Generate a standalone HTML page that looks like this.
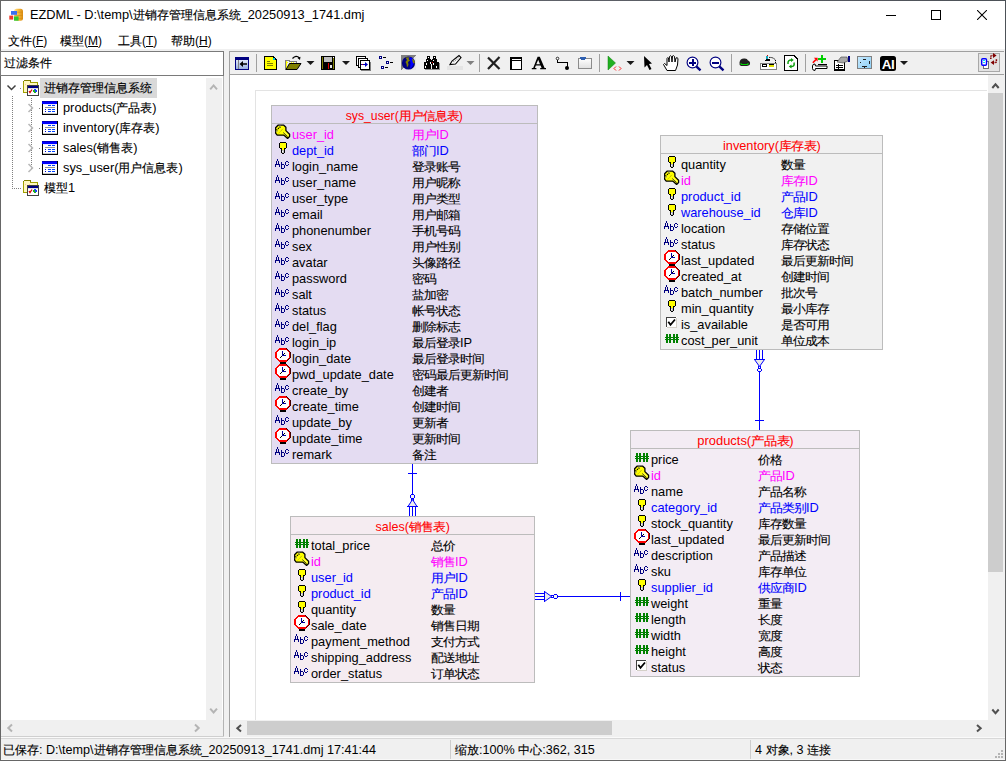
<!DOCTYPE html><html><head><meta charset="utf-8"><style>
html,body{margin:0;padding:0;width:1006px;height:761px;overflow:hidden;background:#f0f0f0}
body{position:relative;font-family:"Liberation Sans",sans-serif;}
.r{position:absolute}
.t{position:absolute;white-space:nowrap;line-height:16px;color:#000}
.dt{font-size:13.5px;line-height:16px;transform:scaleX(0.948);transform-origin:0 0}
.dt .c{font-size:13px;letter-spacing:-0.34px;display:inline-block;transform:translateY(0.6px) scaleY(0.89);transform-origin:50% 50%;-webkit-text-stroke:0.12px currentColor}
.tt .c{font-size:13px;letter-spacing:-0.23px;display:inline-block;transform:scaleY(0.9);transform-origin:50% 60%}
.c{-webkit-text-stroke:0.15px currentColor}
u{text-decoration:underline;text-underline-offset:1px}
</style></head><body>
<div class="r" style="left:0px;top:0px;width:1006px;height:761px;background:#f0f0f0;"></div>
<div class="r" style="left:0px;top:0px;width:1006px;height:1px;background:linear-gradient(to right,#666 0%,#60636a 50%,#4c5157 100%);"></div>
<div class="r" style="left:0px;top:0px;width:1px;height:761px;background:#666;"></div>
<div class="r" style="left:1005px;top:0px;width:1px;height:761px;background:linear-gradient(to bottom,#4c5157,#5a5d60 50%,#666);"></div>
<div class="r" style="left:0px;top:760px;width:1006px;height:1px;background:#666;"></div>
<div class="r" style="left:1px;top:1px;width:1004px;height:48px;background:#fff;"></div>
<!--ICON_APP-->
<div class="t" style="left:30px;top:6px;font-size:12.8px;line-height:18px;letter-spacing:0">EZDML - D:\temp\<span class="c" style="font-size:12px">进销存管理信息系统</span>_20250913_1741.dmj</div>
<div class="r" style="left:886px;top:15px;width:10px;height:1px;background:#000;"></div>
<div class="r" style="left:931px;top:10px;width:8px;height:8px;border:1px solid #000;"></div>
<svg class="r" style="left:977px;top:10px" width="10" height="10"><path d="M0 0L10 10M10 0L0 10" stroke="#000" stroke-width="1.05"/></svg>
<div class="t" style="left:8px;top:32px;font-size:12px;line-height:18px"><span class="c" style="font-size:11.6px">文件</span>(<u>F</u>)</div>
<div class="t" style="left:60px;top:32px;font-size:12px;line-height:18px"><span class="c" style="font-size:11.6px">模型</span>(<u>M</u>)</div>
<div class="t" style="left:118px;top:32px;font-size:12px;line-height:18px"><span class="c" style="font-size:11.6px">工具</span>(<u>T</u>)</div>
<div class="t" style="left:171px;top:32px;font-size:12px;line-height:18px"><span class="c" style="font-size:11.6px">帮助</span>(<u>H</u>)</div>
<div class="r" style="left:0px;top:51px;width:224px;height:25px;background:#fff;box-sizing:border-box;border:1px solid #7a7a7a;border-left-color:#7a7a7a;"></div>
<div class="t" style="left:4px;top:54px;font-size:12px;line-height:18px;"><span class="c" style="font-size:12px">过滤条件</span></div>
<div class="r" style="left:1px;top:76px;width:222px;height:644px;background:#fff;"></div>
<div class="r" style="left:223px;top:76px;width:1px;height:661px;background:#b4b4b4;"></div>
<div class="r" style="left:1px;top:736px;width:223px;height:1px;background:#cfcfcf;"></div>
<div class="r" style="left:206px;top:78px;width:16px;height:642px;background:#f0f0f0;"></div>
<div class="r" style="left:1px;top:720px;width:221px;height:16px;background:#f0f0f0;"></div>
<div class="r" style="left:229px;top:51px;width:775px;height:1px;background:#a0a0a0;"></div>
<div class="r" style="left:229px;top:51px;width:1px;height:686px;background:#a0a0a0;"></div>
<div class="r" style="left:230px;top:52px;width:774px;height:22px;background:#f0f0f0;"></div>
<div class="r" style="left:229px;top:74px;width:775px;height:1px;background:#a0a0a0;"></div>
<svg class="r" style="left:0;top:0" width="1006" height="80" shape-rendering="crispEdges"><rect x="235" y="57" width="14" height="13" fill="#000080"/><defs><linearGradient id="g1" x1="0" y1="0" x2="0" y2="1"><stop offset="0" stop-color="#e0e8f8"/><stop offset="1" stop-color="#98b0e0"/></linearGradient><linearGradient id="g2" x1="0" y1="0" x2="0" y2="1"><stop offset="0" stop-color="#ffffff"/><stop offset="1" stop-color="#e0e0e0"/></linearGradient><linearGradient id="g3" x1="0" y1="0" x2="1" y2="1"><stop offset="0" stop-color="#c8eaff"/><stop offset="1" stop-color="#8ccff5"/></linearGradient></defs><rect x="236" y="60" width="12" height="9" fill="url(#g1)"/><rect x="238" y="60" width="1" height="9" fill="#808080"/><path d="M239.5,64 L243,61 L243,63.3 L247,63.3 L247,64.7 L243,64.7 L243,67 Z" fill="#000" shape-rendering="auto"/><rect x="256" y="54" width="1" height="18" fill="#a0a0a0"/><path d="M264.5,56.5 H273 L276.5,60 V69.5 H264.5 Z" fill="#ffff00" stroke="#000" stroke-width="1"/><rect x="273" y="58" width="2" height="2" fill="#00c8e0"/><rect x="267" y="61" width="3" height="1" fill="#808000"/><rect x="267" y="63" width="6" height="1" fill="#808000"/><rect x="267" y="65" width="6" height="1" fill="#808000"/><path d="M285.5,60.5 H289 L290,61.5 H296 V69.5 H285.5 Z" fill="#f0f0f0" stroke="#808080" stroke-width="1"/><rect x="286" y="61" width="1" height="7" fill="#ffff00"/><rect x="287" y="62" width="1" height="1" fill="#ffff00"/><rect x="289" y="63" width="1" height="1" fill="#ffff00"/><rect x="291" y="62" width="1" height="1" fill="#ffff00"/><rect x="293" y="62" width="1" height="1" fill="#ffff00"/><path d="M286,69.5 L289.5,63.5 H301 L297,69.5 Z" fill="#808000" stroke="#000" stroke-width="1" shape-rendering="auto"/><path d="M292.5,58.5 Q296,54.5 299.5,58" fill="none" stroke="#000" stroke-width="1.2" shape-rendering="auto"/><path d="M297.5,58 L300.5,56.8 L300,60 Z" fill="#000" shape-rendering="auto"/><path d="M306.5,61 h8 l-4,4 z" fill="#1a1a1a" shape-rendering="auto"/><rect x="321" y="56" width="14" height="14" fill="#000"/><rect x="322" y="57" width="12" height="12" fill="#808000"/><rect x="323" y="57" width="10" height="12" fill="#000"/><rect x="324" y="57" width="8" height="5" fill="#c0c0c0"/><rect x="328" y="63" width="1" height="6" fill="#e00000"/><rect x="330" y="65" width="2" height="3" fill="#e8e8e8"/><rect x="333" y="57" width="1" height="1" fill="#fff"/><path d="M342,61 h8 l-4,4 z" fill="#1a1a1a" shape-rendering="auto"/><rect x="361" y="62" width="10" height="9" fill="#808080"/><rect x="356.5" y="56.5" width="9" height="9" fill="#fff" stroke="#000" stroke-width="1"/><rect x="358.5" y="58.5" width="9" height="9" fill="#fff" stroke="#000" stroke-width="1"/><rect x="360.5" y="60.5" width="9" height="9" fill="#fff" stroke="#000" stroke-width="1"/><rect x="361" y="64" width="6" height="1" fill="#0000c0"/><path d="M365,62 L368,64.5 L365,67 Z" fill="#0000c0" shape-rendering="auto"/><rect x="362" y="64" width="1" height="1" fill="#c00000"/><rect x="379" y="56" width="3" height="3" fill="#000080"/><rect x="380" y="57" width="1" height="1" fill="#fff"/><rect x="383" y="57" width="3" height="1" fill="#000"/><rect x="386" y="61" width="3" height="3" fill="#000080"/><rect x="387" y="62" width="1" height="1" fill="#fff"/><rect x="390" y="62" width="3" height="1" fill="#000"/><rect x="381" y="66" width="3" height="3" fill="#000080"/><rect x="382" y="67" width="1" height="1" fill="#fff"/><rect x="385" y="67" width="3" height="1" fill="#000"/><path d="M401,55 H416 L401,70 Z" fill="#808080"/><path d="M416,55 V70 H401 Z" fill="#e8e8e8"/><circle cx="408.5" cy="63" r="6.6" fill="#000080" shape-rendering="auto"/><path d="M409,57 L413,58.5 L414.5,62 L412,67 L410,69 L410.5,63 Z" fill="#0000ff" shape-rendering="auto"/><path d="M405.5,57.5 L409.5,57.2 L408.5,59 L410,60.5 L408,62 L408.5,65 L407,67.5 L406.5,64 L405.5,62 L407,60 Z M412,58.5 L414.2,60 L415,63.5 L413,63 L412.5,61 Z" fill="#808000" shape-rendering="auto"/><rect x="438" y="63" width="2" height="7" fill="#909090"/><rect x="425" y="69" width="15" height="1" fill="#909090"/><rect x="427" y="56" width="3" height="3" fill="#000"/><rect x="433" y="56" width="3" height="3" fill="#000"/><rect x="426" y="59" width="5" height="3" fill="#000"/><rect x="432" y="59" width="5" height="3" fill="#000"/><rect x="430" y="60" width="3" height="4" fill="#000"/><rect x="424" y="62" width="7" height="7" fill="#000"/><rect x="432" y="62" width="7" height="7" fill="#000"/><rect x="428" y="57" width="1" height="1" fill="#fff"/><rect x="434" y="57" width="1" height="1" fill="#fff"/><rect x="427" y="60" width="1" height="1" fill="#fff"/><rect x="433" y="60" width="1" height="1" fill="#fff"/><rect x="426" y="63" width="1" height="2" fill="#fff"/><rect x="430" y="62" width="1" height="2" fill="#fff"/><rect x="433" y="63" width="1" height="2" fill="#fff"/><rect x="425" y="66" width="1" height="2" fill="#fff"/><rect x="436" y="66" width="1" height="2" fill="#fff"/><rect x="432" y="62" width="1" height="1" fill="#e00000"/><path d="M450,64.5 L452,61 L459,55.5 L461,57.5 L455.5,64 Z" fill="#fff" stroke="#000" stroke-width="1.1" shape-rendering="auto"/><path d="M453.5,62 L458.5,57.5" stroke="#909090" stroke-width="1.5" stroke-dasharray="1 1" shape-rendering="auto"/><rect x="447" y="66" width="16" height="4" fill="#e4e4e4"/><path d="M466.5,61 h8 l-4,4 z" fill="#808080" shape-rendering="auto"/><rect x="479" y="54" width="1" height="18" fill="#a0a0a0"/><path d="M488,57.5 L499.5,69 M499.5,57 L488,69" stroke="#202020" stroke-width="2.2" shape-rendering="auto"/><rect x="510.75" y="57.75" width="10.5" height="11.5" fill="#fff" stroke="#000" stroke-width="1.5"/><rect x="510" y="60" width="12" height="1" fill="#000"/><path fill-rule="evenodd" d="M537.6,56.8 L539.8,56.8 L544.6,68 L546,68 L546,69.3 L540.2,69.3 L540.2,68 L541.6,68 L540.6,65.6 L535.8,65.6 L534.9,68 L536.4,68 L536.4,69.3 L531.8,69.3 L531.8,68 L533.2,68 Z M536.3,64.2 L540,64.2 L538.2,59.8 Z" fill="#000" shape-rendering="auto"/><path d="M557.5,60 V62.5 H567.5 V68" fill="none" stroke="#000" stroke-width="1"/><circle cx="557.5" cy="58.5" r="1.3" fill="#fff" stroke="#000" stroke-width="0.8" shape-rendering="auto"/><circle cx="567" cy="68" r="2" fill="#000" shape-rendering="auto"/><rect x="578.5" y="58.5" width="13" height="10" fill="url(#g2)" stroke="#8c8c8c" stroke-width="1"/><rect x="580" y="57" width="6" height="2.5" rx="1" fill="#3060b0"/><rect x="599" y="54" width="1" height="18" fill="#a0a0a0"/><path d="M608,56 L615.5,63 L608,70 Z" fill="#20b020" stroke="#108010" stroke-width="0.5" shape-rendering="auto"/><path d="M616,66.5 L614,68.5 L616,70.5 M619,66.5 L621,68.5 L619,70.5" fill="none" stroke="#ff2020" stroke-width="1" shape-rendering="auto"/><path d="M626.5,61 h8 l-4,4 z" fill="#1a1a1a" shape-rendering="auto"/><path d="M644,56 L652,63.5 L649,64 L651.5,69 L649.5,70 L647,65 L644.5,67.5 Z" fill="#000" shape-rendering="auto"/><path d="M667,70.5 L663.5,64.5 L664.5,63.5 L667,65.5 L667,58.5 Q667.5,57 668.5,58 L669,62 L669.5,56.5 Q670.5,55 671.5,56.5 L672,62 L672.5,56 Q673.5,55 674.5,56.5 L675,62 L676,58 Q677,57 678,58.5 L677.5,65 L675.5,70.5 Z" fill="#fff" stroke="#000" stroke-width="1" shape-rendering="auto"/><circle cx="692.5" cy="62.5" r="5.4" fill="#fff" stroke="#000080" stroke-width="1.15" shape-rendering="auto"/><path d="M696.3,66.3 L700.5,70.3" stroke="#000080" stroke-width="2.4" shape-rendering="auto"/><rect x="689.0" y="61.5" width="7" height="2" fill="#000080"/><rect x="691.5" y="59" width="2" height="7" fill="#000080"/><circle cx="715.5" cy="62.5" r="5.4" fill="#fff" stroke="#000080" stroke-width="1.15" shape-rendering="auto"/><path d="M719.3,66.3 L723.5,70.3" stroke="#000080" stroke-width="2.4" shape-rendering="auto"/><rect x="712.0" y="61.5" width="7" height="2" fill="#000080"/><rect x="731" y="54" width="1" height="18" fill="#a0a0a0"/><path d="M739.5,62.5 Q740,58.5 744,58.5 Q747,58 748,60.5 Q750.5,61.5 750,64 Q749.5,66 745,66 L741,66 Q739,65 739.5,62.5 Z" fill="#202020" shape-rendering="auto"/><path d="M741,63 V64.5 H748 V63" fill="none" stroke="#00d000" stroke-width="1" shape-rendering="auto"/><path d="M765,60.5 h5 l-1,-2 h-3 z" fill="#000"/><rect x="766" y="56" width="2" height="3" fill="#10a8c0"/><rect x="767" y="55" width="1" height="1" fill="#e00000"/><path d="M769,57.5 Q773,57 775.5,60 L775.5,66" fill="none" stroke="#000" stroke-width="1" stroke-dasharray="1.5 0.8" shape-rendering="auto"/><rect x="760.5" y="63.5" width="16" height="6" fill="#fff" stroke="#808080" stroke-width="1"/><rect x="762" y="64" width="5" height="3" fill="#000"/><rect x="763" y="65" width="3" height="1" fill="#fff"/><rect x="769" y="64" width="5" height="3" fill="#e0e000"/><rect x="769" y="64" width="5" height="1" fill="#000"/><path d="M784.5,55.5 H794 L797.5,59 V70.5 H784.5 Z" fill="#fff" stroke="#000" stroke-width="1.2"/><path d="M788,64 Q787.5,59.5 792,60 M794,62.5 Q795,67 790.5,66.5" fill="none" stroke="#10a010" stroke-width="1.5" shape-rendering="auto"/><path d="M791,58 L793.8,60 L791,62 Z M791.5,64.5 L788.7,66.5 L791.5,68.5 Z" fill="#10a010" shape-rendering="auto"/><rect x="805" y="54" width="1" height="18" fill="#a0a0a0"/><path d="M812.8,62.8 L816,59.6" stroke="#ff0000" stroke-width="1.6" shape-rendering="auto"/><path d="M813.8,57.8 H817.6 V61.6 Z" fill="#ff0000" shape-rendering="auto"/><rect x="821" y="55" width="2" height="8" fill="#00d000"/><rect x="818" y="58" width="8" height="2" fill="#00d000"/><path d="M812.5,66 Q812.5,64 815,64 L815.5,66 H827 V68.5 H815.5 L815,70.5 Q812.5,70.5 812.5,68.5 Z" fill="#fff" stroke="#000" stroke-width="1" shape-rendering="auto"/><rect x="818" y="64" width="9" height="1" fill="#000"/><rect x="834.5" y="60.5" width="10" height="9.5" fill="#fff" stroke="#000" stroke-width="1.2"/><rect x="836" y="65" width="7" height="1" fill="#000"/><rect x="836" y="67" width="7" height="1" fill="#000"/><rect x="838" y="64" width="1" height="5" fill="#000"/><path d="M837,62 L841,57 H847 L848,61 L843,63 Z" fill="#a8a8a8" stroke="#404040" stroke-width="0.6" shape-rendering="auto"/><rect x="848" y="56" width="2" height="6" fill="#000080"/><rect x="857.5" y="56.5" width="14" height="12" fill="url(#g3)" stroke="#808080" stroke-width="1"/><rect x="863" y="59" width="3" height="1" fill="#202020"/><rect x="860" y="62" width="1" height="1" fill="#202020"/><rect x="869" y="61" width="1" height="3" fill="#202020"/><rect x="862" y="66" width="5" height="1" fill="#202020"/><rect x="864" y="67" width="1" height="1" fill="#202020"/><rect x="880" y="56" width="16" height="15" rx="2.5" fill="#000" shape-rendering="auto"/><text x="888" y="68.8" font-family="Liberation Sans" font-weight="bold" font-size="13.5" text-anchor="middle" fill="#fff" shape-rendering="auto" letter-spacing="-0.5">AI</text><path d="M900,61 h8 l-4,4 z" fill="#1a1a1a" shape-rendering="auto"/><rect x="978.5" y="53.5" width="21" height="18" fill="#e3e3e3" stroke="#a8a8a8" stroke-width="1"/><rect x="983.5" y="61.5" width="5" height="7" fill="#fff" stroke="#707070" stroke-width="1"/><rect x="981.7" y="58.7" width="4.8" height="6.6" rx="1" fill="#fff" stroke="#0000ff" stroke-width="1.4" shape-rendering="auto"/><rect x="983" y="60" width="2" height="1" fill="#00e0ff"/><rect x="983" y="62" width="2" height="1" fill="#00e0ff"/><path d="M990.8,59 V56.8 Q990.8,55.4 992.5,55.4 H994" fill="none" stroke="#800000" stroke-width="1.5" stroke-dasharray="1.6 0.6" shape-rendering="auto"/><path d="M993,53 L996.6,55.4 L993,58 Z" fill="#800000" shape-rendering="auto"/><path d="M996.4,59.3 V61.2 Q996.4,62.6 994.8,62.6 H993" fill="none" stroke="#800000" stroke-width="1.5" stroke-dasharray="1.6 0.6" shape-rendering="auto"/><path d="M994,60.2 L990.6,62.6 L994,65 Z" fill="#800000" shape-rendering="auto"/></svg>
<div class="r" style="left:230px;top:75px;width:758px;height:645px;background:#fff;"></div>
<div class="r" style="left:255px;top:90px;width:732px;height:1px;background:#e3e3e3;"></div>
<div class="r" style="left:255px;top:90px;width:1px;height:630px;background:#e3e3e3;"></div>
<div class="r" style="left:988px;top:75px;width:16px;height:646px;background:#f0f0f0;"></div>
<div class="r" style="left:988px;top:93px;width:15px;height:479px;background:#cdcdcd;"></div>
<div class="r" style="left:230px;top:720px;width:774px;height:17px;background:#f0f0f0;"></div>
<div class="r" style="left:247px;top:721px;width:365px;height:14px;background:#cdcdcd;"></div>
<div class="r" style="left:1px;top:737px;width:1004px;height:1px;background:#fafafa;"></div>
<div class="r" style="left:1px;top:738px;width:1004px;height:1px;background:#d8d8d8;"></div>
<div class="r" style="left:1px;top:739px;width:1004px;height:20px;background:#f0f0f0;"></div>
<div class="r" style="left:1px;top:759px;width:1004px;height:1px;background:#f8f8f8;"></div>
<div class="r" style="left:450px;top:740px;width:1px;height:19px;background:#cdcdcd;"></div>
<div class="r" style="left:750px;top:740px;width:1px;height:19px;background:#cdcdcd;"></div>
<div class="t" style="left:3px;top:741px;font-size:12.6px;line-height:18px;"><span class="c" style="font-size:12px">已保存</span>: D:\temp\<span class="c" style="font-size:12px">进销存管理信息系统</span>_20250913_1741.dmj 17:41:44</div>
<div class="t" style="left:455px;top:741px;font-size:12.6px;line-height:18px;"><span class="c" style="font-size:12px">缩放</span>:100% <span class="c" style="font-size:12px">中心</span>:362, 315</div>
<div class="t" style="left:755px;top:741px;font-size:12.6px;line-height:18px;">4 <span class="c" style="font-size:12px">对象</span>, 3 <span class="c" style="font-size:12px">连接</span></div>
<div class="r" style="left:40px;top:78px;width:117px;height:20px;background:#d9d9d9;"></div>
<div class="t" style="left:44px;top:79px;font-size:12.8px;line-height:18px;"><span class="c" style="font-size:12px">进销存管理信息系统</span></div>
<div class="t" style="left:63px;top:99px;font-size:12.8px;line-height:18px;">products(<span class="c" style="font-size:12px">产品表</span>)</div>
<div class="t" style="left:63px;top:119px;font-size:12.8px;line-height:18px;">inventory(<span class="c" style="font-size:12px">库存表</span>)</div>
<div class="t" style="left:63px;top:139px;font-size:12.8px;line-height:18px;">sales(<span class="c" style="font-size:12px">销售表</span>)</div>
<div class="t" style="left:63px;top:159px;font-size:12.8px;line-height:18px;">sys_user(<span class="c" style="font-size:12px">用户信息表</span>)</div>
<div class="t" style="left:44px;top:179px;font-size:12.8px;line-height:18px;"><span class="c" style="font-size:12px">模型</span>1</div>
<div class="r" style="left:271px;top:105px;width:267px;height:359px;background:#e4dcf2;box-sizing:border-box;border:1px solid #bcbcbc;"></div>
<div class="r" style="left:271px;top:123px;width:267px;height:1px;background:#bcbcbc;"></div>
<div class="t" style="left:271px;top:108px;width:267px;text-align:center;font-size:13px;line-height:16px;color:#ff0000"><span class="tt" style="display:inline-block;transform:scaleX(0.94);transform-origin:50% 0">sys_user(<span class="c">用户信息表</span>)</span></div>
<svg class="r" style="left:275px;top:124px" width="16" height="16" viewBox="0 0 16 16" shape-rendering="crispEdges"><g shape-rendering="auto"><path d="M3,1.2 L8.8,1.2 L10.9,3.2 L10.9,6.6 L14.6,10.2 L14.6,12.6 L12.6,14.4 L9.6,11.8 L8.8,11.2 L2.2,11.2 L0.6,9.2 L0.6,3.8 Z" fill="#ffff00" stroke="#000" stroke-width="1.3" stroke-linejoin="round"/><path d="M1.5,6.3 L5.8,2.2" stroke="#000" stroke-width="1.4" stroke-dasharray="1.1 1"/><path d="M0.6,7.2 L3,7.1" stroke="#909090" stroke-width="0.7"/><path d="M5,0.8 L5,3" stroke="#909090" stroke-width="0.7"/><path d="M3.5,9.3 L8.6,4.3" stroke="#9a9a00" stroke-width="0.9" stroke-dasharray="0.9 0.9"/><path d="M8.3,8.6 L12.6,12.6" stroke="#202020" stroke-width="0.9"/><path d="M9.6,8.2 L13.6,11.8" stroke="#ffffc0" stroke-width="0.6"/></g></svg>
<div class="t dt" style="left:292px;top:127px;color:#ff00ff">user_id</div>
<div class="t dt" style="left:412px;top:127px;color:#ff00ff"><span class="c">用户</span>ID</div>
<svg class="r" style="left:275px;top:140px" width="16" height="16" viewBox="0 0 16 16" shape-rendering="crispEdges"><rect x="5" y="2" width="6" height="1" fill="#000"/><rect x="4" y="3" width="1" height="5" fill="#000"/><rect x="11" y="3" width="1" height="5" fill="#000"/><rect x="5" y="8" width="2" height="1" fill="#000"/><rect x="9" y="8" width="2" height="1" fill="#000"/><rect x="6" y="9" width="1" height="4" fill="#000"/><rect x="9" y="9" width="1" height="4" fill="#000"/><rect x="7" y="13" width="2" height="1" fill="#000"/><rect x="5" y="3" width="6" height="5" fill="#ffff00"/><rect x="7" y="8" width="2" height="2" fill="#ffff00"/><rect x="7" y="10" width="2" height="3" fill="#c0c0c0"/><rect x="7" y="11" width="1" height="1" fill="#fff"/></svg>
<div class="t dt" style="left:292px;top:143px;color:#0000ff">dept_id</div>
<div class="t dt" style="left:412px;top:143px;color:#0000ff"><span class="c">部门</span>ID</div>
<svg class="r" style="left:275px;top:156px" width="16" height="16" viewBox="0 0 16 16" shape-rendering="crispEdges"><rect x="2" y="3" width="1" height="2" fill="#000080"/><rect x="1" y="5" width="1" height="3" fill="#000080"/><rect x="3" y="5" width="1" height="3" fill="#000080"/><rect x="0" y="8" width="5" height="1" fill="#000080"/><rect x="0" y="9" width="1" height="2" fill="#000080"/><rect x="4" y="9" width="1" height="2" fill="#000080"/><rect x="6" y="6" width="1" height="7" fill="#000080"/><rect x="7" y="8" width="2" height="1" fill="#000080"/><rect x="9" y="9" width="1" height="3" fill="#000080"/><rect x="7" y="12" width="2" height="1" fill="#000080"/><rect x="11" y="5" width="2" height="1" fill="#000080"/><rect x="10" y="6" width="1" height="3" fill="#000080"/><rect x="13" y="6" width="1" height="1" fill="#000080"/><rect x="13" y="8" width="1" height="1" fill="#000080"/><rect x="11" y="9" width="2" height="1" fill="#000080"/></svg>
<div class="t dt" style="left:292px;top:159px;color:#000">login_name</div>
<div class="t dt" style="left:412px;top:159px;color:#000"><span class="c">登录账号</span></div>
<svg class="r" style="left:275px;top:172px" width="16" height="16" viewBox="0 0 16 16" shape-rendering="crispEdges"><rect x="2" y="3" width="1" height="2" fill="#000080"/><rect x="1" y="5" width="1" height="3" fill="#000080"/><rect x="3" y="5" width="1" height="3" fill="#000080"/><rect x="0" y="8" width="5" height="1" fill="#000080"/><rect x="0" y="9" width="1" height="2" fill="#000080"/><rect x="4" y="9" width="1" height="2" fill="#000080"/><rect x="6" y="6" width="1" height="7" fill="#000080"/><rect x="7" y="8" width="2" height="1" fill="#000080"/><rect x="9" y="9" width="1" height="3" fill="#000080"/><rect x="7" y="12" width="2" height="1" fill="#000080"/><rect x="11" y="5" width="2" height="1" fill="#000080"/><rect x="10" y="6" width="1" height="3" fill="#000080"/><rect x="13" y="6" width="1" height="1" fill="#000080"/><rect x="13" y="8" width="1" height="1" fill="#000080"/><rect x="11" y="9" width="2" height="1" fill="#000080"/></svg>
<div class="t dt" style="left:292px;top:175px;color:#000">user_name</div>
<div class="t dt" style="left:412px;top:175px;color:#000"><span class="c">用户昵称</span></div>
<svg class="r" style="left:275px;top:188px" width="16" height="16" viewBox="0 0 16 16" shape-rendering="crispEdges"><rect x="2" y="3" width="1" height="2" fill="#000080"/><rect x="1" y="5" width="1" height="3" fill="#000080"/><rect x="3" y="5" width="1" height="3" fill="#000080"/><rect x="0" y="8" width="5" height="1" fill="#000080"/><rect x="0" y="9" width="1" height="2" fill="#000080"/><rect x="4" y="9" width="1" height="2" fill="#000080"/><rect x="6" y="6" width="1" height="7" fill="#000080"/><rect x="7" y="8" width="2" height="1" fill="#000080"/><rect x="9" y="9" width="1" height="3" fill="#000080"/><rect x="7" y="12" width="2" height="1" fill="#000080"/><rect x="11" y="5" width="2" height="1" fill="#000080"/><rect x="10" y="6" width="1" height="3" fill="#000080"/><rect x="13" y="6" width="1" height="1" fill="#000080"/><rect x="13" y="8" width="1" height="1" fill="#000080"/><rect x="11" y="9" width="2" height="1" fill="#000080"/></svg>
<div class="t dt" style="left:292px;top:191px;color:#000">user_type</div>
<div class="t dt" style="left:412px;top:191px;color:#000"><span class="c">用户类型</span></div>
<svg class="r" style="left:275px;top:204px" width="16" height="16" viewBox="0 0 16 16" shape-rendering="crispEdges"><rect x="2" y="3" width="1" height="2" fill="#000080"/><rect x="1" y="5" width="1" height="3" fill="#000080"/><rect x="3" y="5" width="1" height="3" fill="#000080"/><rect x="0" y="8" width="5" height="1" fill="#000080"/><rect x="0" y="9" width="1" height="2" fill="#000080"/><rect x="4" y="9" width="1" height="2" fill="#000080"/><rect x="6" y="6" width="1" height="7" fill="#000080"/><rect x="7" y="8" width="2" height="1" fill="#000080"/><rect x="9" y="9" width="1" height="3" fill="#000080"/><rect x="7" y="12" width="2" height="1" fill="#000080"/><rect x="11" y="5" width="2" height="1" fill="#000080"/><rect x="10" y="6" width="1" height="3" fill="#000080"/><rect x="13" y="6" width="1" height="1" fill="#000080"/><rect x="13" y="8" width="1" height="1" fill="#000080"/><rect x="11" y="9" width="2" height="1" fill="#000080"/></svg>
<div class="t dt" style="left:292px;top:207px;color:#000">email</div>
<div class="t dt" style="left:412px;top:207px;color:#000"><span class="c">用户邮箱</span></div>
<svg class="r" style="left:275px;top:220px" width="16" height="16" viewBox="0 0 16 16" shape-rendering="crispEdges"><rect x="2" y="3" width="1" height="2" fill="#000080"/><rect x="1" y="5" width="1" height="3" fill="#000080"/><rect x="3" y="5" width="1" height="3" fill="#000080"/><rect x="0" y="8" width="5" height="1" fill="#000080"/><rect x="0" y="9" width="1" height="2" fill="#000080"/><rect x="4" y="9" width="1" height="2" fill="#000080"/><rect x="6" y="6" width="1" height="7" fill="#000080"/><rect x="7" y="8" width="2" height="1" fill="#000080"/><rect x="9" y="9" width="1" height="3" fill="#000080"/><rect x="7" y="12" width="2" height="1" fill="#000080"/><rect x="11" y="5" width="2" height="1" fill="#000080"/><rect x="10" y="6" width="1" height="3" fill="#000080"/><rect x="13" y="6" width="1" height="1" fill="#000080"/><rect x="13" y="8" width="1" height="1" fill="#000080"/><rect x="11" y="9" width="2" height="1" fill="#000080"/></svg>
<div class="t dt" style="left:292px;top:223px;color:#000">phonenumber</div>
<div class="t dt" style="left:412px;top:223px;color:#000"><span class="c">手机号码</span></div>
<svg class="r" style="left:275px;top:236px" width="16" height="16" viewBox="0 0 16 16" shape-rendering="crispEdges"><rect x="2" y="3" width="1" height="2" fill="#000080"/><rect x="1" y="5" width="1" height="3" fill="#000080"/><rect x="3" y="5" width="1" height="3" fill="#000080"/><rect x="0" y="8" width="5" height="1" fill="#000080"/><rect x="0" y="9" width="1" height="2" fill="#000080"/><rect x="4" y="9" width="1" height="2" fill="#000080"/><rect x="6" y="6" width="1" height="7" fill="#000080"/><rect x="7" y="8" width="2" height="1" fill="#000080"/><rect x="9" y="9" width="1" height="3" fill="#000080"/><rect x="7" y="12" width="2" height="1" fill="#000080"/><rect x="11" y="5" width="2" height="1" fill="#000080"/><rect x="10" y="6" width="1" height="3" fill="#000080"/><rect x="13" y="6" width="1" height="1" fill="#000080"/><rect x="13" y="8" width="1" height="1" fill="#000080"/><rect x="11" y="9" width="2" height="1" fill="#000080"/></svg>
<div class="t dt" style="left:292px;top:239px;color:#000">sex</div>
<div class="t dt" style="left:412px;top:239px;color:#000"><span class="c">用户性别</span></div>
<svg class="r" style="left:275px;top:252px" width="16" height="16" viewBox="0 0 16 16" shape-rendering="crispEdges"><rect x="2" y="3" width="1" height="2" fill="#000080"/><rect x="1" y="5" width="1" height="3" fill="#000080"/><rect x="3" y="5" width="1" height="3" fill="#000080"/><rect x="0" y="8" width="5" height="1" fill="#000080"/><rect x="0" y="9" width="1" height="2" fill="#000080"/><rect x="4" y="9" width="1" height="2" fill="#000080"/><rect x="6" y="6" width="1" height="7" fill="#000080"/><rect x="7" y="8" width="2" height="1" fill="#000080"/><rect x="9" y="9" width="1" height="3" fill="#000080"/><rect x="7" y="12" width="2" height="1" fill="#000080"/><rect x="11" y="5" width="2" height="1" fill="#000080"/><rect x="10" y="6" width="1" height="3" fill="#000080"/><rect x="13" y="6" width="1" height="1" fill="#000080"/><rect x="13" y="8" width="1" height="1" fill="#000080"/><rect x="11" y="9" width="2" height="1" fill="#000080"/></svg>
<div class="t dt" style="left:292px;top:255px;color:#000">avatar</div>
<div class="t dt" style="left:412px;top:255px;color:#000"><span class="c">头像路径</span></div>
<svg class="r" style="left:275px;top:268px" width="16" height="16" viewBox="0 0 16 16" shape-rendering="crispEdges"><rect x="2" y="3" width="1" height="2" fill="#000080"/><rect x="1" y="5" width="1" height="3" fill="#000080"/><rect x="3" y="5" width="1" height="3" fill="#000080"/><rect x="0" y="8" width="5" height="1" fill="#000080"/><rect x="0" y="9" width="1" height="2" fill="#000080"/><rect x="4" y="9" width="1" height="2" fill="#000080"/><rect x="6" y="6" width="1" height="7" fill="#000080"/><rect x="7" y="8" width="2" height="1" fill="#000080"/><rect x="9" y="9" width="1" height="3" fill="#000080"/><rect x="7" y="12" width="2" height="1" fill="#000080"/><rect x="11" y="5" width="2" height="1" fill="#000080"/><rect x="10" y="6" width="1" height="3" fill="#000080"/><rect x="13" y="6" width="1" height="1" fill="#000080"/><rect x="13" y="8" width="1" height="1" fill="#000080"/><rect x="11" y="9" width="2" height="1" fill="#000080"/></svg>
<div class="t dt" style="left:292px;top:271px;color:#000">password</div>
<div class="t dt" style="left:412px;top:271px;color:#000"><span class="c">密码</span></div>
<svg class="r" style="left:275px;top:284px" width="16" height="16" viewBox="0 0 16 16" shape-rendering="crispEdges"><rect x="2" y="3" width="1" height="2" fill="#000080"/><rect x="1" y="5" width="1" height="3" fill="#000080"/><rect x="3" y="5" width="1" height="3" fill="#000080"/><rect x="0" y="8" width="5" height="1" fill="#000080"/><rect x="0" y="9" width="1" height="2" fill="#000080"/><rect x="4" y="9" width="1" height="2" fill="#000080"/><rect x="6" y="6" width="1" height="7" fill="#000080"/><rect x="7" y="8" width="2" height="1" fill="#000080"/><rect x="9" y="9" width="1" height="3" fill="#000080"/><rect x="7" y="12" width="2" height="1" fill="#000080"/><rect x="11" y="5" width="2" height="1" fill="#000080"/><rect x="10" y="6" width="1" height="3" fill="#000080"/><rect x="13" y="6" width="1" height="1" fill="#000080"/><rect x="13" y="8" width="1" height="1" fill="#000080"/><rect x="11" y="9" width="2" height="1" fill="#000080"/></svg>
<div class="t dt" style="left:292px;top:287px;color:#000">salt</div>
<div class="t dt" style="left:412px;top:287px;color:#000"><span class="c">盐加密</span></div>
<svg class="r" style="left:275px;top:300px" width="16" height="16" viewBox="0 0 16 16" shape-rendering="crispEdges"><rect x="2" y="3" width="1" height="2" fill="#000080"/><rect x="1" y="5" width="1" height="3" fill="#000080"/><rect x="3" y="5" width="1" height="3" fill="#000080"/><rect x="0" y="8" width="5" height="1" fill="#000080"/><rect x="0" y="9" width="1" height="2" fill="#000080"/><rect x="4" y="9" width="1" height="2" fill="#000080"/><rect x="6" y="6" width="1" height="7" fill="#000080"/><rect x="7" y="8" width="2" height="1" fill="#000080"/><rect x="9" y="9" width="1" height="3" fill="#000080"/><rect x="7" y="12" width="2" height="1" fill="#000080"/><rect x="11" y="5" width="2" height="1" fill="#000080"/><rect x="10" y="6" width="1" height="3" fill="#000080"/><rect x="13" y="6" width="1" height="1" fill="#000080"/><rect x="13" y="8" width="1" height="1" fill="#000080"/><rect x="11" y="9" width="2" height="1" fill="#000080"/></svg>
<div class="t dt" style="left:292px;top:303px;color:#000">status</div>
<div class="t dt" style="left:412px;top:303px;color:#000"><span class="c">帐号状态</span></div>
<svg class="r" style="left:275px;top:316px" width="16" height="16" viewBox="0 0 16 16" shape-rendering="crispEdges"><rect x="2" y="3" width="1" height="2" fill="#000080"/><rect x="1" y="5" width="1" height="3" fill="#000080"/><rect x="3" y="5" width="1" height="3" fill="#000080"/><rect x="0" y="8" width="5" height="1" fill="#000080"/><rect x="0" y="9" width="1" height="2" fill="#000080"/><rect x="4" y="9" width="1" height="2" fill="#000080"/><rect x="6" y="6" width="1" height="7" fill="#000080"/><rect x="7" y="8" width="2" height="1" fill="#000080"/><rect x="9" y="9" width="1" height="3" fill="#000080"/><rect x="7" y="12" width="2" height="1" fill="#000080"/><rect x="11" y="5" width="2" height="1" fill="#000080"/><rect x="10" y="6" width="1" height="3" fill="#000080"/><rect x="13" y="6" width="1" height="1" fill="#000080"/><rect x="13" y="8" width="1" height="1" fill="#000080"/><rect x="11" y="9" width="2" height="1" fill="#000080"/></svg>
<div class="t dt" style="left:292px;top:319px;color:#000">del_flag</div>
<div class="t dt" style="left:412px;top:319px;color:#000"><span class="c">删除标志</span></div>
<svg class="r" style="left:275px;top:332px" width="16" height="16" viewBox="0 0 16 16" shape-rendering="crispEdges"><rect x="2" y="3" width="1" height="2" fill="#000080"/><rect x="1" y="5" width="1" height="3" fill="#000080"/><rect x="3" y="5" width="1" height="3" fill="#000080"/><rect x="0" y="8" width="5" height="1" fill="#000080"/><rect x="0" y="9" width="1" height="2" fill="#000080"/><rect x="4" y="9" width="1" height="2" fill="#000080"/><rect x="6" y="6" width="1" height="7" fill="#000080"/><rect x="7" y="8" width="2" height="1" fill="#000080"/><rect x="9" y="9" width="1" height="3" fill="#000080"/><rect x="7" y="12" width="2" height="1" fill="#000080"/><rect x="11" y="5" width="2" height="1" fill="#000080"/><rect x="10" y="6" width="1" height="3" fill="#000080"/><rect x="13" y="6" width="1" height="1" fill="#000080"/><rect x="13" y="8" width="1" height="1" fill="#000080"/><rect x="11" y="9" width="2" height="1" fill="#000080"/></svg>
<div class="t dt" style="left:292px;top:335px;color:#000">login_ip</div>
<div class="t dt" style="left:412px;top:335px;color:#000"><span class="c">最后登录</span>IP</div>
<svg class="r" style="left:275px;top:348px" width="16" height="16" viewBox="0 0 16 16" shape-rendering="crispEdges"><path d="M1,4.5 L4.5,1 L11.5,1 L15,4.5 L15,9.5 L11.5,13 L4.5,13 L1,9.5 Z" fill="#fff" stroke="#ff0000" stroke-width="2"/><path d="M11.5,0.5 L15.5,4.5 L15.5,9.5 L11.5,13.5" fill="none" stroke="#000" stroke-width="1" opacity="0.75"/><rect x="5" y="14" width="6" height="2" fill="#000"/><rect x="7" y="3" width="1" height="5" fill="#0000a0"/><rect x="7" y="7" width="4" height="1" fill="#0000a0"/><rect x="5" y="9" width="1" height="1" fill="#000"/><rect x="6" y="8" width="1" height="1" fill="#000"/><rect x="8" y="6" width="1" height="1" fill="#000"/><rect x="9" y="5" width="1" height="1" fill="#000"/></svg>
<div class="t dt" style="left:292px;top:351px;color:#000">login_date</div>
<div class="t dt" style="left:412px;top:351px;color:#000"><span class="c">最后登录时间</span></div>
<svg class="r" style="left:275px;top:364px" width="16" height="16" viewBox="0 0 16 16" shape-rendering="crispEdges"><path d="M1,4.5 L4.5,1 L11.5,1 L15,4.5 L15,9.5 L11.5,13 L4.5,13 L1,9.5 Z" fill="#fff" stroke="#ff0000" stroke-width="2"/><path d="M11.5,0.5 L15.5,4.5 L15.5,9.5 L11.5,13.5" fill="none" stroke="#000" stroke-width="1" opacity="0.75"/><rect x="5" y="14" width="6" height="2" fill="#000"/><rect x="7" y="3" width="1" height="5" fill="#0000a0"/><rect x="7" y="7" width="4" height="1" fill="#0000a0"/><rect x="5" y="9" width="1" height="1" fill="#000"/><rect x="6" y="8" width="1" height="1" fill="#000"/><rect x="8" y="6" width="1" height="1" fill="#000"/><rect x="9" y="5" width="1" height="1" fill="#000"/></svg>
<div class="t dt" style="left:292px;top:367px;color:#000">pwd_update_date</div>
<div class="t dt" style="left:412px;top:367px;color:#000"><span class="c">密码最后更新时间</span></div>
<svg class="r" style="left:275px;top:380px" width="16" height="16" viewBox="0 0 16 16" shape-rendering="crispEdges"><rect x="2" y="3" width="1" height="2" fill="#000080"/><rect x="1" y="5" width="1" height="3" fill="#000080"/><rect x="3" y="5" width="1" height="3" fill="#000080"/><rect x="0" y="8" width="5" height="1" fill="#000080"/><rect x="0" y="9" width="1" height="2" fill="#000080"/><rect x="4" y="9" width="1" height="2" fill="#000080"/><rect x="6" y="6" width="1" height="7" fill="#000080"/><rect x="7" y="8" width="2" height="1" fill="#000080"/><rect x="9" y="9" width="1" height="3" fill="#000080"/><rect x="7" y="12" width="2" height="1" fill="#000080"/><rect x="11" y="5" width="2" height="1" fill="#000080"/><rect x="10" y="6" width="1" height="3" fill="#000080"/><rect x="13" y="6" width="1" height="1" fill="#000080"/><rect x="13" y="8" width="1" height="1" fill="#000080"/><rect x="11" y="9" width="2" height="1" fill="#000080"/></svg>
<div class="t dt" style="left:292px;top:383px;color:#000">create_by</div>
<div class="t dt" style="left:412px;top:383px;color:#000"><span class="c">创建者</span></div>
<svg class="r" style="left:275px;top:396px" width="16" height="16" viewBox="0 0 16 16" shape-rendering="crispEdges"><path d="M1,4.5 L4.5,1 L11.5,1 L15,4.5 L15,9.5 L11.5,13 L4.5,13 L1,9.5 Z" fill="#fff" stroke="#ff0000" stroke-width="2"/><path d="M11.5,0.5 L15.5,4.5 L15.5,9.5 L11.5,13.5" fill="none" stroke="#000" stroke-width="1" opacity="0.75"/><rect x="5" y="14" width="6" height="2" fill="#000"/><rect x="7" y="3" width="1" height="5" fill="#0000a0"/><rect x="7" y="7" width="4" height="1" fill="#0000a0"/><rect x="5" y="9" width="1" height="1" fill="#000"/><rect x="6" y="8" width="1" height="1" fill="#000"/><rect x="8" y="6" width="1" height="1" fill="#000"/><rect x="9" y="5" width="1" height="1" fill="#000"/></svg>
<div class="t dt" style="left:292px;top:399px;color:#000">create_time</div>
<div class="t dt" style="left:412px;top:399px;color:#000"><span class="c">创建时间</span></div>
<svg class="r" style="left:275px;top:412px" width="16" height="16" viewBox="0 0 16 16" shape-rendering="crispEdges"><rect x="2" y="3" width="1" height="2" fill="#000080"/><rect x="1" y="5" width="1" height="3" fill="#000080"/><rect x="3" y="5" width="1" height="3" fill="#000080"/><rect x="0" y="8" width="5" height="1" fill="#000080"/><rect x="0" y="9" width="1" height="2" fill="#000080"/><rect x="4" y="9" width="1" height="2" fill="#000080"/><rect x="6" y="6" width="1" height="7" fill="#000080"/><rect x="7" y="8" width="2" height="1" fill="#000080"/><rect x="9" y="9" width="1" height="3" fill="#000080"/><rect x="7" y="12" width="2" height="1" fill="#000080"/><rect x="11" y="5" width="2" height="1" fill="#000080"/><rect x="10" y="6" width="1" height="3" fill="#000080"/><rect x="13" y="6" width="1" height="1" fill="#000080"/><rect x="13" y="8" width="1" height="1" fill="#000080"/><rect x="11" y="9" width="2" height="1" fill="#000080"/></svg>
<div class="t dt" style="left:292px;top:415px;color:#000">update_by</div>
<div class="t dt" style="left:412px;top:415px;color:#000"><span class="c">更新者</span></div>
<svg class="r" style="left:275px;top:428px" width="16" height="16" viewBox="0 0 16 16" shape-rendering="crispEdges"><path d="M1,4.5 L4.5,1 L11.5,1 L15,4.5 L15,9.5 L11.5,13 L4.5,13 L1,9.5 Z" fill="#fff" stroke="#ff0000" stroke-width="2"/><path d="M11.5,0.5 L15.5,4.5 L15.5,9.5 L11.5,13.5" fill="none" stroke="#000" stroke-width="1" opacity="0.75"/><rect x="5" y="14" width="6" height="2" fill="#000"/><rect x="7" y="3" width="1" height="5" fill="#0000a0"/><rect x="7" y="7" width="4" height="1" fill="#0000a0"/><rect x="5" y="9" width="1" height="1" fill="#000"/><rect x="6" y="8" width="1" height="1" fill="#000"/><rect x="8" y="6" width="1" height="1" fill="#000"/><rect x="9" y="5" width="1" height="1" fill="#000"/></svg>
<div class="t dt" style="left:292px;top:431px;color:#000">update_time</div>
<div class="t dt" style="left:412px;top:431px;color:#000"><span class="c">更新时间</span></div>
<svg class="r" style="left:275px;top:444px" width="16" height="16" viewBox="0 0 16 16" shape-rendering="crispEdges"><rect x="2" y="3" width="1" height="2" fill="#000080"/><rect x="1" y="5" width="1" height="3" fill="#000080"/><rect x="3" y="5" width="1" height="3" fill="#000080"/><rect x="0" y="8" width="5" height="1" fill="#000080"/><rect x="0" y="9" width="1" height="2" fill="#000080"/><rect x="4" y="9" width="1" height="2" fill="#000080"/><rect x="6" y="6" width="1" height="7" fill="#000080"/><rect x="7" y="8" width="2" height="1" fill="#000080"/><rect x="9" y="9" width="1" height="3" fill="#000080"/><rect x="7" y="12" width="2" height="1" fill="#000080"/><rect x="11" y="5" width="2" height="1" fill="#000080"/><rect x="10" y="6" width="1" height="3" fill="#000080"/><rect x="13" y="6" width="1" height="1" fill="#000080"/><rect x="13" y="8" width="1" height="1" fill="#000080"/><rect x="11" y="9" width="2" height="1" fill="#000080"/></svg>
<div class="t dt" style="left:292px;top:447px;color:#000">remark</div>
<div class="t dt" style="left:412px;top:447px;color:#000"><span class="c">备注</span></div>
<div class="r" style="left:660px;top:135px;width:223px;height:215px;background:#f1f1f1;box-sizing:border-box;border:1px solid #bcbcbc;"></div>
<div class="r" style="left:660px;top:153px;width:223px;height:1px;background:#bcbcbc;"></div>
<div class="t" style="left:660px;top:138px;width:223px;text-align:center;font-size:13px;line-height:16px;color:#ff0000"><span class="tt" style="display:inline-block;transform:scaleX(0.98);transform-origin:50% 0">inventory(<span class="c">库存表</span>)</span></div>
<svg class="r" style="left:664px;top:154px" width="16" height="16" viewBox="0 0 16 16" shape-rendering="crispEdges"><rect x="5" y="2" width="6" height="1" fill="#000"/><rect x="4" y="3" width="1" height="5" fill="#000"/><rect x="11" y="3" width="1" height="5" fill="#000"/><rect x="5" y="8" width="2" height="1" fill="#000"/><rect x="9" y="8" width="2" height="1" fill="#000"/><rect x="6" y="9" width="1" height="4" fill="#000"/><rect x="9" y="9" width="1" height="4" fill="#000"/><rect x="7" y="13" width="2" height="1" fill="#000"/><rect x="5" y="3" width="6" height="5" fill="#ffff00"/><rect x="7" y="8" width="2" height="2" fill="#ffff00"/><rect x="7" y="10" width="2" height="3" fill="#c0c0c0"/><rect x="7" y="11" width="1" height="1" fill="#fff"/></svg>
<div class="t dt" style="left:681px;top:157px;color:#000">quantity</div>
<div class="t dt" style="left:781px;top:157px;color:#000"><span class="c">数量</span></div>
<svg class="r" style="left:664px;top:170px" width="16" height="16" viewBox="0 0 16 16" shape-rendering="crispEdges"><g shape-rendering="auto"><path d="M3,1.2 L8.8,1.2 L10.9,3.2 L10.9,6.6 L14.6,10.2 L14.6,12.6 L12.6,14.4 L9.6,11.8 L8.8,11.2 L2.2,11.2 L0.6,9.2 L0.6,3.8 Z" fill="#ffff00" stroke="#000" stroke-width="1.3" stroke-linejoin="round"/><path d="M1.5,6.3 L5.8,2.2" stroke="#000" stroke-width="1.4" stroke-dasharray="1.1 1"/><path d="M0.6,7.2 L3,7.1" stroke="#909090" stroke-width="0.7"/><path d="M5,0.8 L5,3" stroke="#909090" stroke-width="0.7"/><path d="M3.5,9.3 L8.6,4.3" stroke="#9a9a00" stroke-width="0.9" stroke-dasharray="0.9 0.9"/><path d="M8.3,8.6 L12.6,12.6" stroke="#202020" stroke-width="0.9"/><path d="M9.6,8.2 L13.6,11.8" stroke="#ffffc0" stroke-width="0.6"/></g></svg>
<div class="t dt" style="left:681px;top:173px;color:#ff00ff">id</div>
<div class="t dt" style="left:781px;top:173px;color:#ff00ff"><span class="c">库存</span>ID</div>
<svg class="r" style="left:664px;top:186px" width="16" height="16" viewBox="0 0 16 16" shape-rendering="crispEdges"><rect x="5" y="2" width="6" height="1" fill="#000"/><rect x="4" y="3" width="1" height="5" fill="#000"/><rect x="11" y="3" width="1" height="5" fill="#000"/><rect x="5" y="8" width="2" height="1" fill="#000"/><rect x="9" y="8" width="2" height="1" fill="#000"/><rect x="6" y="9" width="1" height="4" fill="#000"/><rect x="9" y="9" width="1" height="4" fill="#000"/><rect x="7" y="13" width="2" height="1" fill="#000"/><rect x="5" y="3" width="6" height="5" fill="#ffff00"/><rect x="7" y="8" width="2" height="2" fill="#ffff00"/><rect x="7" y="10" width="2" height="3" fill="#c0c0c0"/><rect x="7" y="11" width="1" height="1" fill="#fff"/></svg>
<div class="t dt" style="left:681px;top:189px;color:#0000ff">product_id</div>
<div class="t dt" style="left:781px;top:189px;color:#0000ff"><span class="c">产品</span>ID</div>
<svg class="r" style="left:664px;top:202px" width="16" height="16" viewBox="0 0 16 16" shape-rendering="crispEdges"><rect x="5" y="2" width="6" height="1" fill="#000"/><rect x="4" y="3" width="1" height="5" fill="#000"/><rect x="11" y="3" width="1" height="5" fill="#000"/><rect x="5" y="8" width="2" height="1" fill="#000"/><rect x="9" y="8" width="2" height="1" fill="#000"/><rect x="6" y="9" width="1" height="4" fill="#000"/><rect x="9" y="9" width="1" height="4" fill="#000"/><rect x="7" y="13" width="2" height="1" fill="#000"/><rect x="5" y="3" width="6" height="5" fill="#ffff00"/><rect x="7" y="8" width="2" height="2" fill="#ffff00"/><rect x="7" y="10" width="2" height="3" fill="#c0c0c0"/><rect x="7" y="11" width="1" height="1" fill="#fff"/></svg>
<div class="t dt" style="left:681px;top:205px;color:#0000ff">warehouse_id</div>
<div class="t dt" style="left:781px;top:205px;color:#0000ff"><span class="c">仓库</span>ID</div>
<svg class="r" style="left:664px;top:218px" width="16" height="16" viewBox="0 0 16 16" shape-rendering="crispEdges"><rect x="2" y="3" width="1" height="2" fill="#000080"/><rect x="1" y="5" width="1" height="3" fill="#000080"/><rect x="3" y="5" width="1" height="3" fill="#000080"/><rect x="0" y="8" width="5" height="1" fill="#000080"/><rect x="0" y="9" width="1" height="2" fill="#000080"/><rect x="4" y="9" width="1" height="2" fill="#000080"/><rect x="6" y="6" width="1" height="7" fill="#000080"/><rect x="7" y="8" width="2" height="1" fill="#000080"/><rect x="9" y="9" width="1" height="3" fill="#000080"/><rect x="7" y="12" width="2" height="1" fill="#000080"/><rect x="11" y="5" width="2" height="1" fill="#000080"/><rect x="10" y="6" width="1" height="3" fill="#000080"/><rect x="13" y="6" width="1" height="1" fill="#000080"/><rect x="13" y="8" width="1" height="1" fill="#000080"/><rect x="11" y="9" width="2" height="1" fill="#000080"/></svg>
<div class="t dt" style="left:681px;top:221px;color:#000">location</div>
<div class="t dt" style="left:781px;top:221px;color:#000"><span class="c">存储位置</span></div>
<svg class="r" style="left:664px;top:234px" width="16" height="16" viewBox="0 0 16 16" shape-rendering="crispEdges"><rect x="2" y="3" width="1" height="2" fill="#000080"/><rect x="1" y="5" width="1" height="3" fill="#000080"/><rect x="3" y="5" width="1" height="3" fill="#000080"/><rect x="0" y="8" width="5" height="1" fill="#000080"/><rect x="0" y="9" width="1" height="2" fill="#000080"/><rect x="4" y="9" width="1" height="2" fill="#000080"/><rect x="6" y="6" width="1" height="7" fill="#000080"/><rect x="7" y="8" width="2" height="1" fill="#000080"/><rect x="9" y="9" width="1" height="3" fill="#000080"/><rect x="7" y="12" width="2" height="1" fill="#000080"/><rect x="11" y="5" width="2" height="1" fill="#000080"/><rect x="10" y="6" width="1" height="3" fill="#000080"/><rect x="13" y="6" width="1" height="1" fill="#000080"/><rect x="13" y="8" width="1" height="1" fill="#000080"/><rect x="11" y="9" width="2" height="1" fill="#000080"/></svg>
<div class="t dt" style="left:681px;top:237px;color:#000">status</div>
<div class="t dt" style="left:781px;top:237px;color:#000"><span class="c">库存状态</span></div>
<svg class="r" style="left:664px;top:250px" width="16" height="16" viewBox="0 0 16 16" shape-rendering="crispEdges"><path d="M1,4.5 L4.5,1 L11.5,1 L15,4.5 L15,9.5 L11.5,13 L4.5,13 L1,9.5 Z" fill="#fff" stroke="#ff0000" stroke-width="2"/><path d="M11.5,0.5 L15.5,4.5 L15.5,9.5 L11.5,13.5" fill="none" stroke="#000" stroke-width="1" opacity="0.75"/><rect x="5" y="14" width="6" height="2" fill="#000"/><rect x="7" y="3" width="1" height="5" fill="#0000a0"/><rect x="7" y="7" width="4" height="1" fill="#0000a0"/><rect x="5" y="9" width="1" height="1" fill="#000"/><rect x="6" y="8" width="1" height="1" fill="#000"/><rect x="8" y="6" width="1" height="1" fill="#000"/><rect x="9" y="5" width="1" height="1" fill="#000"/></svg>
<div class="t dt" style="left:681px;top:253px;color:#000">last_updated</div>
<div class="t dt" style="left:781px;top:253px;color:#000"><span class="c">最后更新时间</span></div>
<svg class="r" style="left:664px;top:266px" width="16" height="16" viewBox="0 0 16 16" shape-rendering="crispEdges"><path d="M1,4.5 L4.5,1 L11.5,1 L15,4.5 L15,9.5 L11.5,13 L4.5,13 L1,9.5 Z" fill="#fff" stroke="#ff0000" stroke-width="2"/><path d="M11.5,0.5 L15.5,4.5 L15.5,9.5 L11.5,13.5" fill="none" stroke="#000" stroke-width="1" opacity="0.75"/><rect x="5" y="14" width="6" height="2" fill="#000"/><rect x="7" y="3" width="1" height="5" fill="#0000a0"/><rect x="7" y="7" width="4" height="1" fill="#0000a0"/><rect x="5" y="9" width="1" height="1" fill="#000"/><rect x="6" y="8" width="1" height="1" fill="#000"/><rect x="8" y="6" width="1" height="1" fill="#000"/><rect x="9" y="5" width="1" height="1" fill="#000"/></svg>
<div class="t dt" style="left:681px;top:269px;color:#000">created_at</div>
<div class="t dt" style="left:781px;top:269px;color:#000"><span class="c">创建时间</span></div>
<svg class="r" style="left:664px;top:282px" width="16" height="16" viewBox="0 0 16 16" shape-rendering="crispEdges"><rect x="2" y="3" width="1" height="2" fill="#000080"/><rect x="1" y="5" width="1" height="3" fill="#000080"/><rect x="3" y="5" width="1" height="3" fill="#000080"/><rect x="0" y="8" width="5" height="1" fill="#000080"/><rect x="0" y="9" width="1" height="2" fill="#000080"/><rect x="4" y="9" width="1" height="2" fill="#000080"/><rect x="6" y="6" width="1" height="7" fill="#000080"/><rect x="7" y="8" width="2" height="1" fill="#000080"/><rect x="9" y="9" width="1" height="3" fill="#000080"/><rect x="7" y="12" width="2" height="1" fill="#000080"/><rect x="11" y="5" width="2" height="1" fill="#000080"/><rect x="10" y="6" width="1" height="3" fill="#000080"/><rect x="13" y="6" width="1" height="1" fill="#000080"/><rect x="13" y="8" width="1" height="1" fill="#000080"/><rect x="11" y="9" width="2" height="1" fill="#000080"/></svg>
<div class="t dt" style="left:681px;top:285px;color:#000">batch_number</div>
<div class="t dt" style="left:781px;top:285px;color:#000"><span class="c">批次号</span></div>
<svg class="r" style="left:664px;top:298px" width="16" height="16" viewBox="0 0 16 16" shape-rendering="crispEdges"><rect x="5" y="2" width="6" height="1" fill="#000"/><rect x="4" y="3" width="1" height="5" fill="#000"/><rect x="11" y="3" width="1" height="5" fill="#000"/><rect x="5" y="8" width="2" height="1" fill="#000"/><rect x="9" y="8" width="2" height="1" fill="#000"/><rect x="6" y="9" width="1" height="4" fill="#000"/><rect x="9" y="9" width="1" height="4" fill="#000"/><rect x="7" y="13" width="2" height="1" fill="#000"/><rect x="5" y="3" width="6" height="5" fill="#ffff00"/><rect x="7" y="8" width="2" height="2" fill="#ffff00"/><rect x="7" y="10" width="2" height="3" fill="#c0c0c0"/><rect x="7" y="11" width="1" height="1" fill="#fff"/></svg>
<div class="t dt" style="left:681px;top:301px;color:#000">min_quantity</div>
<div class="t dt" style="left:781px;top:301px;color:#000"><span class="c">最小库存</span></div>
<svg class="r" style="left:664px;top:314px" width="16" height="16" viewBox="0 0 16 16" shape-rendering="crispEdges"><rect x="2" y="3" width="11" height="11" fill="#fff"/><rect x="2" y="3" width="10" height="1" fill="#404040"/><rect x="2" y="3" width="1" height="10" fill="#404040"/><rect x="3" y="13" width="10" height="1" fill="#d4d0c8"/><rect x="12" y="4" width="1" height="10" fill="#d4d0c8"/><path d="M4.3,7.8 L6.5,10.8 L11,5.5" fill="none" stroke="#000" stroke-width="1.8" shape-rendering="auto"/></svg>
<div class="t dt" style="left:681px;top:317px;color:#000">is_available</div>
<div class="t dt" style="left:781px;top:317px;color:#000"><span class="c">是否可用</span></div>
<svg class="r" style="left:664px;top:330px" width="16" height="16" viewBox="0 0 16 16" shape-rendering="crispEdges"><rect x="2" y="4" width="2" height="9" fill="#008000"/><rect x="5" y="4" width="2" height="9" fill="#008000"/><rect x="9" y="4" width="2" height="9" fill="#008000"/><rect x="12" y="4" width="2" height="9" fill="#008000"/><rect x="1" y="7" width="14" height="1" fill="#008000"/><rect x="1" y="9" width="14" height="1" fill="#008000"/></svg>
<div class="t dt" style="left:681px;top:333px;color:#000">cost_per_unit</div>
<div class="t dt" style="left:781px;top:333px;color:#000"><span class="c">单位成本</span></div>
<div class="r" style="left:630px;top:430px;width:230px;height:247px;background:#f3ecf4;box-sizing:border-box;border:1px solid #bcbcbc;"></div>
<div class="r" style="left:630px;top:448px;width:230px;height:1px;background:#bcbcbc;"></div>
<div class="t" style="left:630px;top:433px;width:230px;text-align:center;font-size:13px;line-height:16px;color:#ff0000"><span class="tt" style="display:inline-block;transform:scaleX(0.995);transform-origin:50% 0">products(<span class="c">产品表</span>)</span></div>
<svg class="r" style="left:634px;top:449px" width="16" height="16" viewBox="0 0 16 16" shape-rendering="crispEdges"><rect x="2" y="4" width="2" height="9" fill="#008000"/><rect x="5" y="4" width="2" height="9" fill="#008000"/><rect x="9" y="4" width="2" height="9" fill="#008000"/><rect x="12" y="4" width="2" height="9" fill="#008000"/><rect x="1" y="7" width="14" height="1" fill="#008000"/><rect x="1" y="9" width="14" height="1" fill="#008000"/></svg>
<div class="t dt" style="left:651px;top:452px;color:#000">price</div>
<div class="t dt" style="left:758px;top:452px;color:#000"><span class="c">价格</span></div>
<svg class="r" style="left:634px;top:465px" width="16" height="16" viewBox="0 0 16 16" shape-rendering="crispEdges"><g shape-rendering="auto"><path d="M3,1.2 L8.8,1.2 L10.9,3.2 L10.9,6.6 L14.6,10.2 L14.6,12.6 L12.6,14.4 L9.6,11.8 L8.8,11.2 L2.2,11.2 L0.6,9.2 L0.6,3.8 Z" fill="#ffff00" stroke="#000" stroke-width="1.3" stroke-linejoin="round"/><path d="M1.5,6.3 L5.8,2.2" stroke="#000" stroke-width="1.4" stroke-dasharray="1.1 1"/><path d="M0.6,7.2 L3,7.1" stroke="#909090" stroke-width="0.7"/><path d="M5,0.8 L5,3" stroke="#909090" stroke-width="0.7"/><path d="M3.5,9.3 L8.6,4.3" stroke="#9a9a00" stroke-width="0.9" stroke-dasharray="0.9 0.9"/><path d="M8.3,8.6 L12.6,12.6" stroke="#202020" stroke-width="0.9"/><path d="M9.6,8.2 L13.6,11.8" stroke="#ffffc0" stroke-width="0.6"/></g></svg>
<div class="t dt" style="left:651px;top:468px;color:#ff00ff">id</div>
<div class="t dt" style="left:758px;top:468px;color:#ff00ff"><span class="c">产品</span>ID</div>
<svg class="r" style="left:634px;top:481px" width="16" height="16" viewBox="0 0 16 16" shape-rendering="crispEdges"><rect x="2" y="3" width="1" height="2" fill="#000080"/><rect x="1" y="5" width="1" height="3" fill="#000080"/><rect x="3" y="5" width="1" height="3" fill="#000080"/><rect x="0" y="8" width="5" height="1" fill="#000080"/><rect x="0" y="9" width="1" height="2" fill="#000080"/><rect x="4" y="9" width="1" height="2" fill="#000080"/><rect x="6" y="6" width="1" height="7" fill="#000080"/><rect x="7" y="8" width="2" height="1" fill="#000080"/><rect x="9" y="9" width="1" height="3" fill="#000080"/><rect x="7" y="12" width="2" height="1" fill="#000080"/><rect x="11" y="5" width="2" height="1" fill="#000080"/><rect x="10" y="6" width="1" height="3" fill="#000080"/><rect x="13" y="6" width="1" height="1" fill="#000080"/><rect x="13" y="8" width="1" height="1" fill="#000080"/><rect x="11" y="9" width="2" height="1" fill="#000080"/></svg>
<div class="t dt" style="left:651px;top:484px;color:#000">name</div>
<div class="t dt" style="left:758px;top:484px;color:#000"><span class="c">产品名称</span></div>
<svg class="r" style="left:634px;top:497px" width="16" height="16" viewBox="0 0 16 16" shape-rendering="crispEdges"><rect x="5" y="2" width="6" height="1" fill="#000"/><rect x="4" y="3" width="1" height="5" fill="#000"/><rect x="11" y="3" width="1" height="5" fill="#000"/><rect x="5" y="8" width="2" height="1" fill="#000"/><rect x="9" y="8" width="2" height="1" fill="#000"/><rect x="6" y="9" width="1" height="4" fill="#000"/><rect x="9" y="9" width="1" height="4" fill="#000"/><rect x="7" y="13" width="2" height="1" fill="#000"/><rect x="5" y="3" width="6" height="5" fill="#ffff00"/><rect x="7" y="8" width="2" height="2" fill="#ffff00"/><rect x="7" y="10" width="2" height="3" fill="#c0c0c0"/><rect x="7" y="11" width="1" height="1" fill="#fff"/></svg>
<div class="t dt" style="left:651px;top:500px;color:#0000ff">category_id</div>
<div class="t dt" style="left:758px;top:500px;color:#0000ff"><span class="c">产品类别</span>ID</div>
<svg class="r" style="left:634px;top:513px" width="16" height="16" viewBox="0 0 16 16" shape-rendering="crispEdges"><rect x="5" y="2" width="6" height="1" fill="#000"/><rect x="4" y="3" width="1" height="5" fill="#000"/><rect x="11" y="3" width="1" height="5" fill="#000"/><rect x="5" y="8" width="2" height="1" fill="#000"/><rect x="9" y="8" width="2" height="1" fill="#000"/><rect x="6" y="9" width="1" height="4" fill="#000"/><rect x="9" y="9" width="1" height="4" fill="#000"/><rect x="7" y="13" width="2" height="1" fill="#000"/><rect x="5" y="3" width="6" height="5" fill="#ffff00"/><rect x="7" y="8" width="2" height="2" fill="#ffff00"/><rect x="7" y="10" width="2" height="3" fill="#c0c0c0"/><rect x="7" y="11" width="1" height="1" fill="#fff"/></svg>
<div class="t dt" style="left:651px;top:516px;color:#000">stock_quantity</div>
<div class="t dt" style="left:758px;top:516px;color:#000"><span class="c">库存数量</span></div>
<svg class="r" style="left:634px;top:529px" width="16" height="16" viewBox="0 0 16 16" shape-rendering="crispEdges"><path d="M1,4.5 L4.5,1 L11.5,1 L15,4.5 L15,9.5 L11.5,13 L4.5,13 L1,9.5 Z" fill="#fff" stroke="#ff0000" stroke-width="2"/><path d="M11.5,0.5 L15.5,4.5 L15.5,9.5 L11.5,13.5" fill="none" stroke="#000" stroke-width="1" opacity="0.75"/><rect x="5" y="14" width="6" height="2" fill="#000"/><rect x="7" y="3" width="1" height="5" fill="#0000a0"/><rect x="7" y="7" width="4" height="1" fill="#0000a0"/><rect x="5" y="9" width="1" height="1" fill="#000"/><rect x="6" y="8" width="1" height="1" fill="#000"/><rect x="8" y="6" width="1" height="1" fill="#000"/><rect x="9" y="5" width="1" height="1" fill="#000"/></svg>
<div class="t dt" style="left:651px;top:532px;color:#000">last_updated</div>
<div class="t dt" style="left:758px;top:532px;color:#000"><span class="c">最后更新时间</span></div>
<svg class="r" style="left:634px;top:545px" width="16" height="16" viewBox="0 0 16 16" shape-rendering="crispEdges"><rect x="2" y="3" width="1" height="2" fill="#000080"/><rect x="1" y="5" width="1" height="3" fill="#000080"/><rect x="3" y="5" width="1" height="3" fill="#000080"/><rect x="0" y="8" width="5" height="1" fill="#000080"/><rect x="0" y="9" width="1" height="2" fill="#000080"/><rect x="4" y="9" width="1" height="2" fill="#000080"/><rect x="6" y="6" width="1" height="7" fill="#000080"/><rect x="7" y="8" width="2" height="1" fill="#000080"/><rect x="9" y="9" width="1" height="3" fill="#000080"/><rect x="7" y="12" width="2" height="1" fill="#000080"/><rect x="11" y="5" width="2" height="1" fill="#000080"/><rect x="10" y="6" width="1" height="3" fill="#000080"/><rect x="13" y="6" width="1" height="1" fill="#000080"/><rect x="13" y="8" width="1" height="1" fill="#000080"/><rect x="11" y="9" width="2" height="1" fill="#000080"/></svg>
<div class="t dt" style="left:651px;top:548px;color:#000">description</div>
<div class="t dt" style="left:758px;top:548px;color:#000"><span class="c">产品描述</span></div>
<svg class="r" style="left:634px;top:561px" width="16" height="16" viewBox="0 0 16 16" shape-rendering="crispEdges"><rect x="2" y="3" width="1" height="2" fill="#000080"/><rect x="1" y="5" width="1" height="3" fill="#000080"/><rect x="3" y="5" width="1" height="3" fill="#000080"/><rect x="0" y="8" width="5" height="1" fill="#000080"/><rect x="0" y="9" width="1" height="2" fill="#000080"/><rect x="4" y="9" width="1" height="2" fill="#000080"/><rect x="6" y="6" width="1" height="7" fill="#000080"/><rect x="7" y="8" width="2" height="1" fill="#000080"/><rect x="9" y="9" width="1" height="3" fill="#000080"/><rect x="7" y="12" width="2" height="1" fill="#000080"/><rect x="11" y="5" width="2" height="1" fill="#000080"/><rect x="10" y="6" width="1" height="3" fill="#000080"/><rect x="13" y="6" width="1" height="1" fill="#000080"/><rect x="13" y="8" width="1" height="1" fill="#000080"/><rect x="11" y="9" width="2" height="1" fill="#000080"/></svg>
<div class="t dt" style="left:651px;top:564px;color:#000">sku</div>
<div class="t dt" style="left:758px;top:564px;color:#000"><span class="c">库存单位</span></div>
<svg class="r" style="left:634px;top:577px" width="16" height="16" viewBox="0 0 16 16" shape-rendering="crispEdges"><rect x="5" y="2" width="6" height="1" fill="#000"/><rect x="4" y="3" width="1" height="5" fill="#000"/><rect x="11" y="3" width="1" height="5" fill="#000"/><rect x="5" y="8" width="2" height="1" fill="#000"/><rect x="9" y="8" width="2" height="1" fill="#000"/><rect x="6" y="9" width="1" height="4" fill="#000"/><rect x="9" y="9" width="1" height="4" fill="#000"/><rect x="7" y="13" width="2" height="1" fill="#000"/><rect x="5" y="3" width="6" height="5" fill="#ffff00"/><rect x="7" y="8" width="2" height="2" fill="#ffff00"/><rect x="7" y="10" width="2" height="3" fill="#c0c0c0"/><rect x="7" y="11" width="1" height="1" fill="#fff"/></svg>
<div class="t dt" style="left:651px;top:580px;color:#0000ff">supplier_id</div>
<div class="t dt" style="left:758px;top:580px;color:#0000ff"><span class="c">供应商</span>ID</div>
<svg class="r" style="left:634px;top:593px" width="16" height="16" viewBox="0 0 16 16" shape-rendering="crispEdges"><rect x="2" y="4" width="2" height="9" fill="#008000"/><rect x="5" y="4" width="2" height="9" fill="#008000"/><rect x="9" y="4" width="2" height="9" fill="#008000"/><rect x="12" y="4" width="2" height="9" fill="#008000"/><rect x="1" y="7" width="14" height="1" fill="#008000"/><rect x="1" y="9" width="14" height="1" fill="#008000"/></svg>
<div class="t dt" style="left:651px;top:596px;color:#000">weight</div>
<div class="t dt" style="left:758px;top:596px;color:#000"><span class="c">重量</span></div>
<svg class="r" style="left:634px;top:609px" width="16" height="16" viewBox="0 0 16 16" shape-rendering="crispEdges"><rect x="2" y="4" width="2" height="9" fill="#008000"/><rect x="5" y="4" width="2" height="9" fill="#008000"/><rect x="9" y="4" width="2" height="9" fill="#008000"/><rect x="12" y="4" width="2" height="9" fill="#008000"/><rect x="1" y="7" width="14" height="1" fill="#008000"/><rect x="1" y="9" width="14" height="1" fill="#008000"/></svg>
<div class="t dt" style="left:651px;top:612px;color:#000">length</div>
<div class="t dt" style="left:758px;top:612px;color:#000"><span class="c">长度</span></div>
<svg class="r" style="left:634px;top:625px" width="16" height="16" viewBox="0 0 16 16" shape-rendering="crispEdges"><rect x="2" y="4" width="2" height="9" fill="#008000"/><rect x="5" y="4" width="2" height="9" fill="#008000"/><rect x="9" y="4" width="2" height="9" fill="#008000"/><rect x="12" y="4" width="2" height="9" fill="#008000"/><rect x="1" y="7" width="14" height="1" fill="#008000"/><rect x="1" y="9" width="14" height="1" fill="#008000"/></svg>
<div class="t dt" style="left:651px;top:628px;color:#000">width</div>
<div class="t dt" style="left:758px;top:628px;color:#000"><span class="c">宽度</span></div>
<svg class="r" style="left:634px;top:641px" width="16" height="16" viewBox="0 0 16 16" shape-rendering="crispEdges"><rect x="2" y="4" width="2" height="9" fill="#008000"/><rect x="5" y="4" width="2" height="9" fill="#008000"/><rect x="9" y="4" width="2" height="9" fill="#008000"/><rect x="12" y="4" width="2" height="9" fill="#008000"/><rect x="1" y="7" width="14" height="1" fill="#008000"/><rect x="1" y="9" width="14" height="1" fill="#008000"/></svg>
<div class="t dt" style="left:651px;top:644px;color:#000">height</div>
<div class="t dt" style="left:758px;top:644px;color:#000"><span class="c">高度</span></div>
<svg class="r" style="left:634px;top:657px" width="16" height="16" viewBox="0 0 16 16" shape-rendering="crispEdges"><rect x="2" y="3" width="11" height="11" fill="#fff"/><rect x="2" y="3" width="10" height="1" fill="#404040"/><rect x="2" y="3" width="1" height="10" fill="#404040"/><rect x="3" y="13" width="10" height="1" fill="#d4d0c8"/><rect x="12" y="4" width="1" height="10" fill="#d4d0c8"/><path d="M4.3,7.8 L6.5,10.8 L11,5.5" fill="none" stroke="#000" stroke-width="1.8" shape-rendering="auto"/></svg>
<div class="t dt" style="left:651px;top:660px;color:#000">status</div>
<div class="t dt" style="left:758px;top:660px;color:#000"><span class="c">状态</span></div>
<div class="r" style="left:290px;top:516px;width:245px;height:167px;background:#f5ecf1;box-sizing:border-box;border:1px solid #bcbcbc;"></div>
<div class="r" style="left:290px;top:534px;width:245px;height:1px;background:#bcbcbc;"></div>
<div class="t" style="left:290px;top:519px;width:245px;text-align:center;font-size:13px;line-height:16px;color:#ff0000"><span class="tt" style="display:inline-block;transform:scaleX(0.96);transform-origin:50% 0">sales(<span class="c">销售表</span>)</span></div>
<svg class="r" style="left:294px;top:535px" width="16" height="16" viewBox="0 0 16 16" shape-rendering="crispEdges"><rect x="2" y="4" width="2" height="9" fill="#008000"/><rect x="5" y="4" width="2" height="9" fill="#008000"/><rect x="9" y="4" width="2" height="9" fill="#008000"/><rect x="12" y="4" width="2" height="9" fill="#008000"/><rect x="1" y="7" width="14" height="1" fill="#008000"/><rect x="1" y="9" width="14" height="1" fill="#008000"/></svg>
<div class="t dt" style="left:311px;top:538px;color:#000">total_price</div>
<div class="t dt" style="left:431px;top:538px;color:#000"><span class="c">总价</span></div>
<svg class="r" style="left:294px;top:551px" width="16" height="16" viewBox="0 0 16 16" shape-rendering="crispEdges"><g shape-rendering="auto"><path d="M3,1.2 L8.8,1.2 L10.9,3.2 L10.9,6.6 L14.6,10.2 L14.6,12.6 L12.6,14.4 L9.6,11.8 L8.8,11.2 L2.2,11.2 L0.6,9.2 L0.6,3.8 Z" fill="#ffff00" stroke="#000" stroke-width="1.3" stroke-linejoin="round"/><path d="M1.5,6.3 L5.8,2.2" stroke="#000" stroke-width="1.4" stroke-dasharray="1.1 1"/><path d="M0.6,7.2 L3,7.1" stroke="#909090" stroke-width="0.7"/><path d="M5,0.8 L5,3" stroke="#909090" stroke-width="0.7"/><path d="M3.5,9.3 L8.6,4.3" stroke="#9a9a00" stroke-width="0.9" stroke-dasharray="0.9 0.9"/><path d="M8.3,8.6 L12.6,12.6" stroke="#202020" stroke-width="0.9"/><path d="M9.6,8.2 L13.6,11.8" stroke="#ffffc0" stroke-width="0.6"/></g></svg>
<div class="t dt" style="left:311px;top:554px;color:#ff00ff">id</div>
<div class="t dt" style="left:431px;top:554px;color:#ff00ff"><span class="c">销售</span>ID</div>
<svg class="r" style="left:294px;top:567px" width="16" height="16" viewBox="0 0 16 16" shape-rendering="crispEdges"><rect x="5" y="2" width="6" height="1" fill="#000"/><rect x="4" y="3" width="1" height="5" fill="#000"/><rect x="11" y="3" width="1" height="5" fill="#000"/><rect x="5" y="8" width="2" height="1" fill="#000"/><rect x="9" y="8" width="2" height="1" fill="#000"/><rect x="6" y="9" width="1" height="4" fill="#000"/><rect x="9" y="9" width="1" height="4" fill="#000"/><rect x="7" y="13" width="2" height="1" fill="#000"/><rect x="5" y="3" width="6" height="5" fill="#ffff00"/><rect x="7" y="8" width="2" height="2" fill="#ffff00"/><rect x="7" y="10" width="2" height="3" fill="#c0c0c0"/><rect x="7" y="11" width="1" height="1" fill="#fff"/></svg>
<div class="t dt" style="left:311px;top:570px;color:#0000ff">user_id</div>
<div class="t dt" style="left:431px;top:570px;color:#0000ff"><span class="c">用户</span>ID</div>
<svg class="r" style="left:294px;top:583px" width="16" height="16" viewBox="0 0 16 16" shape-rendering="crispEdges"><rect x="5" y="2" width="6" height="1" fill="#000"/><rect x="4" y="3" width="1" height="5" fill="#000"/><rect x="11" y="3" width="1" height="5" fill="#000"/><rect x="5" y="8" width="2" height="1" fill="#000"/><rect x="9" y="8" width="2" height="1" fill="#000"/><rect x="6" y="9" width="1" height="4" fill="#000"/><rect x="9" y="9" width="1" height="4" fill="#000"/><rect x="7" y="13" width="2" height="1" fill="#000"/><rect x="5" y="3" width="6" height="5" fill="#ffff00"/><rect x="7" y="8" width="2" height="2" fill="#ffff00"/><rect x="7" y="10" width="2" height="3" fill="#c0c0c0"/><rect x="7" y="11" width="1" height="1" fill="#fff"/></svg>
<div class="t dt" style="left:311px;top:586px;color:#0000ff">product_id</div>
<div class="t dt" style="left:431px;top:586px;color:#0000ff"><span class="c">产品</span>ID</div>
<svg class="r" style="left:294px;top:599px" width="16" height="16" viewBox="0 0 16 16" shape-rendering="crispEdges"><rect x="5" y="2" width="6" height="1" fill="#000"/><rect x="4" y="3" width="1" height="5" fill="#000"/><rect x="11" y="3" width="1" height="5" fill="#000"/><rect x="5" y="8" width="2" height="1" fill="#000"/><rect x="9" y="8" width="2" height="1" fill="#000"/><rect x="6" y="9" width="1" height="4" fill="#000"/><rect x="9" y="9" width="1" height="4" fill="#000"/><rect x="7" y="13" width="2" height="1" fill="#000"/><rect x="5" y="3" width="6" height="5" fill="#ffff00"/><rect x="7" y="8" width="2" height="2" fill="#ffff00"/><rect x="7" y="10" width="2" height="3" fill="#c0c0c0"/><rect x="7" y="11" width="1" height="1" fill="#fff"/></svg>
<div class="t dt" style="left:311px;top:602px;color:#000">quantity</div>
<div class="t dt" style="left:431px;top:602px;color:#000"><span class="c">数量</span></div>
<svg class="r" style="left:294px;top:615px" width="16" height="16" viewBox="0 0 16 16" shape-rendering="crispEdges"><path d="M1,4.5 L4.5,1 L11.5,1 L15,4.5 L15,9.5 L11.5,13 L4.5,13 L1,9.5 Z" fill="#fff" stroke="#ff0000" stroke-width="2"/><path d="M11.5,0.5 L15.5,4.5 L15.5,9.5 L11.5,13.5" fill="none" stroke="#000" stroke-width="1" opacity="0.75"/><rect x="5" y="14" width="6" height="2" fill="#000"/><rect x="7" y="3" width="1" height="5" fill="#0000a0"/><rect x="7" y="7" width="4" height="1" fill="#0000a0"/><rect x="5" y="9" width="1" height="1" fill="#000"/><rect x="6" y="8" width="1" height="1" fill="#000"/><rect x="8" y="6" width="1" height="1" fill="#000"/><rect x="9" y="5" width="1" height="1" fill="#000"/></svg>
<div class="t dt" style="left:311px;top:618px;color:#000">sale_date</div>
<div class="t dt" style="left:431px;top:618px;color:#000"><span class="c">销售日期</span></div>
<svg class="r" style="left:294px;top:631px" width="16" height="16" viewBox="0 0 16 16" shape-rendering="crispEdges"><rect x="2" y="3" width="1" height="2" fill="#000080"/><rect x="1" y="5" width="1" height="3" fill="#000080"/><rect x="3" y="5" width="1" height="3" fill="#000080"/><rect x="0" y="8" width="5" height="1" fill="#000080"/><rect x="0" y="9" width="1" height="2" fill="#000080"/><rect x="4" y="9" width="1" height="2" fill="#000080"/><rect x="6" y="6" width="1" height="7" fill="#000080"/><rect x="7" y="8" width="2" height="1" fill="#000080"/><rect x="9" y="9" width="1" height="3" fill="#000080"/><rect x="7" y="12" width="2" height="1" fill="#000080"/><rect x="11" y="5" width="2" height="1" fill="#000080"/><rect x="10" y="6" width="1" height="3" fill="#000080"/><rect x="13" y="6" width="1" height="1" fill="#000080"/><rect x="13" y="8" width="1" height="1" fill="#000080"/><rect x="11" y="9" width="2" height="1" fill="#000080"/></svg>
<div class="t dt" style="left:311px;top:634px;color:#000">payment_method</div>
<div class="t dt" style="left:431px;top:634px;color:#000"><span class="c">支付方式</span></div>
<svg class="r" style="left:294px;top:647px" width="16" height="16" viewBox="0 0 16 16" shape-rendering="crispEdges"><rect x="2" y="3" width="1" height="2" fill="#000080"/><rect x="1" y="5" width="1" height="3" fill="#000080"/><rect x="3" y="5" width="1" height="3" fill="#000080"/><rect x="0" y="8" width="5" height="1" fill="#000080"/><rect x="0" y="9" width="1" height="2" fill="#000080"/><rect x="4" y="9" width="1" height="2" fill="#000080"/><rect x="6" y="6" width="1" height="7" fill="#000080"/><rect x="7" y="8" width="2" height="1" fill="#000080"/><rect x="9" y="9" width="1" height="3" fill="#000080"/><rect x="7" y="12" width="2" height="1" fill="#000080"/><rect x="11" y="5" width="2" height="1" fill="#000080"/><rect x="10" y="6" width="1" height="3" fill="#000080"/><rect x="13" y="6" width="1" height="1" fill="#000080"/><rect x="13" y="8" width="1" height="1" fill="#000080"/><rect x="11" y="9" width="2" height="1" fill="#000080"/></svg>
<div class="t dt" style="left:311px;top:650px;color:#000">shipping_address</div>
<div class="t dt" style="left:431px;top:650px;color:#000"><span class="c">配送地址</span></div>
<svg class="r" style="left:294px;top:663px" width="16" height="16" viewBox="0 0 16 16" shape-rendering="crispEdges"><rect x="2" y="3" width="1" height="2" fill="#000080"/><rect x="1" y="5" width="1" height="3" fill="#000080"/><rect x="3" y="5" width="1" height="3" fill="#000080"/><rect x="0" y="8" width="5" height="1" fill="#000080"/><rect x="0" y="9" width="1" height="2" fill="#000080"/><rect x="4" y="9" width="1" height="2" fill="#000080"/><rect x="6" y="6" width="1" height="7" fill="#000080"/><rect x="7" y="8" width="2" height="1" fill="#000080"/><rect x="9" y="9" width="1" height="3" fill="#000080"/><rect x="7" y="12" width="2" height="1" fill="#000080"/><rect x="11" y="5" width="2" height="1" fill="#000080"/><rect x="10" y="6" width="1" height="3" fill="#000080"/><rect x="13" y="6" width="1" height="1" fill="#000080"/><rect x="13" y="8" width="1" height="1" fill="#000080"/><rect x="11" y="9" width="2" height="1" fill="#000080"/></svg>
<div class="t dt" style="left:311px;top:666px;color:#000">order_status</div>
<div class="t dt" style="left:431px;top:666px;color:#000"><span class="c">订单状态</span></div>
<svg class="r" style="left:0;top:0" width="1006" height="761" shape-rendering="crispEdges"><rect x="412" y="464" width="1" height="30" fill="#0000ff"/><rect x="408" y="473" width="9" height="1" fill="#0000ff"/><rect x="411" y="495" width="3" height="3" fill="#f8f8f0"/><rect x="411" y="494" width="3" height="1" fill="#0000ff"/><rect x="410" y="495" width="1" height="3" fill="#0000ff"/><rect x="414" y="495" width="1" height="3" fill="#0000ff"/><rect x="411" y="498" width="3" height="1" fill="#0000ff"/><path d="M412.5,499.5 L408,506.5 L417,506.5 Z" fill="#ececec" stroke="#0000ff" stroke-width="1" shape-rendering="auto"/><rect x="411" y="499" width="1" height="2" fill="#0000ff"/><rect x="413" y="499" width="1" height="2" fill="#0000ff"/><rect x="407" y="506" width="11" height="1" fill="#0000ff"/><rect x="409" y="507" width="1" height="9" fill="#0000ff"/><rect x="412" y="507" width="1" height="9" fill="#0000ff"/><rect x="415" y="507" width="1" height="9" fill="#0000ff"/><rect x="756" y="350" width="1" height="9" fill="#0000ff"/><rect x="759" y="350" width="1" height="9" fill="#0000ff"/><rect x="762" y="350" width="1" height="9" fill="#0000ff"/><rect x="754" y="359" width="11" height="1" fill="#0000ff"/><path d="M754.5,359.5 L759.5,366.5 L764.5,359.5 Z" fill="#ececec" stroke="#0000ff" stroke-width="1" shape-rendering="auto"/><rect x="758" y="366" width="1" height="2" fill="#0000ff"/><rect x="760" y="366" width="1" height="2" fill="#0000ff"/><rect x="758" y="369" width="3" height="2" fill="#f8f8f0"/><rect x="758" y="368" width="3" height="1" fill="#0000ff"/><rect x="757" y="369" width="1" height="2" fill="#0000ff"/><rect x="761" y="369" width="1" height="2" fill="#0000ff"/><rect x="758" y="371" width="3" height="1" fill="#0000ff"/><rect x="759" y="372" width="1" height="58" fill="#0000ff"/><rect x="755" y="420" width="9" height="1" fill="#0000ff"/><rect x="535" y="593" width="9" height="1" fill="#0000ff"/><rect x="535" y="596" width="9" height="1" fill="#0000ff"/><rect x="535" y="599" width="9" height="1" fill="#0000ff"/><rect x="544" y="591" width="1" height="11" fill="#0000ff"/><path d="M544.5,591.5 L551.5,596.5 L544.5,601.5 Z" fill="#ececec" stroke="#0000ff" stroke-width="1" shape-rendering="auto"/><rect x="551" y="595" width="2" height="1" fill="#0000ff"/><rect x="551" y="597" width="2" height="1" fill="#0000ff"/><rect x="554" y="595" width="3" height="3" fill="#f8f8f0"/><rect x="554" y="594" width="3" height="1" fill="#0000ff"/><rect x="553" y="595" width="1" height="3" fill="#0000ff"/><rect x="557" y="595" width="1" height="3" fill="#0000ff"/><rect x="554" y="598" width="3" height="1" fill="#0000ff"/><rect x="558" y="596" width="72" height="1" fill="#0000ff"/><rect x="620" y="592" width="1" height="9" fill="#0000ff"/></svg>
<svg class="r" style="left:0;top:0" width="1006" height="761" shape-rendering="crispEdges"><defs><linearGradient id="gold" x1="0" y1="0" x2="1" y2="0"><stop offset="0" stop-color="#ffe7a0"/><stop offset="0.5" stop-color="#f6b83a"/><stop offset="1" stop-color="#d98a10"/></linearGradient></defs><g shape-rendering="auto"><rect x="14" y="8.8" width="9" height="12" rx="2.5" fill="url(#gold)"/><path d="M14.3,12.2 H22.8 M14.3,15.5 H22.8 M14.3,18.6 H22.8" stroke="#d08a10" stroke-width="0.6"/><rect x="11" y="11" width="6" height="3.8" fill="#3a6ef0"/><rect x="9.3" y="15.6" width="3.9" height="4" fill="#f03a2a"/><rect x="14" y="16.4" width="4.6" height="4.3" fill="#2ec82e"/></g><path d="M7.5,85.5 L11.5,89.5 L15.5,85.5" fill="none" stroke="#404040" stroke-width="1.5" shape-rendering="auto"/><rect x="12" y="96" width="1" height="1" fill="#808080"/><rect x="12" y="98" width="1" height="1" fill="#808080"/><rect x="12" y="100" width="1" height="1" fill="#808080"/><rect x="12" y="102" width="1" height="1" fill="#808080"/><rect x="12" y="104" width="1" height="1" fill="#808080"/><rect x="12" y="106" width="1" height="1" fill="#808080"/><rect x="12" y="108" width="1" height="1" fill="#808080"/><rect x="12" y="110" width="1" height="1" fill="#808080"/><rect x="12" y="112" width="1" height="1" fill="#808080"/><rect x="12" y="114" width="1" height="1" fill="#808080"/><rect x="12" y="116" width="1" height="1" fill="#808080"/><rect x="12" y="118" width="1" height="1" fill="#808080"/><rect x="12" y="120" width="1" height="1" fill="#808080"/><rect x="12" y="122" width="1" height="1" fill="#808080"/><rect x="12" y="124" width="1" height="1" fill="#808080"/><rect x="12" y="126" width="1" height="1" fill="#808080"/><rect x="12" y="128" width="1" height="1" fill="#808080"/><rect x="12" y="130" width="1" height="1" fill="#808080"/><rect x="12" y="132" width="1" height="1" fill="#808080"/><rect x="12" y="134" width="1" height="1" fill="#808080"/><rect x="12" y="136" width="1" height="1" fill="#808080"/><rect x="12" y="138" width="1" height="1" fill="#808080"/><rect x="12" y="140" width="1" height="1" fill="#808080"/><rect x="12" y="142" width="1" height="1" fill="#808080"/><rect x="12" y="144" width="1" height="1" fill="#808080"/><rect x="12" y="146" width="1" height="1" fill="#808080"/><rect x="12" y="148" width="1" height="1" fill="#808080"/><rect x="12" y="150" width="1" height="1" fill="#808080"/><rect x="12" y="152" width="1" height="1" fill="#808080"/><rect x="12" y="154" width="1" height="1" fill="#808080"/><rect x="12" y="156" width="1" height="1" fill="#808080"/><rect x="12" y="158" width="1" height="1" fill="#808080"/><rect x="12" y="160" width="1" height="1" fill="#808080"/><rect x="12" y="162" width="1" height="1" fill="#808080"/><rect x="12" y="164" width="1" height="1" fill="#808080"/><rect x="12" y="166" width="1" height="1" fill="#808080"/><rect x="12" y="168" width="1" height="1" fill="#808080"/><rect x="12" y="170" width="1" height="1" fill="#808080"/><rect x="12" y="172" width="1" height="1" fill="#808080"/><rect x="12" y="174" width="1" height="1" fill="#808080"/><rect x="12" y="176" width="1" height="1" fill="#808080"/><rect x="12" y="178" width="1" height="1" fill="#808080"/><rect x="12" y="180" width="1" height="1" fill="#808080"/><rect x="12" y="182" width="1" height="1" fill="#808080"/><rect x="12" y="184" width="1" height="1" fill="#808080"/><rect x="12" y="186" width="1" height="1" fill="#808080"/><rect x="12" y="188" width="1" height="1" fill="#808080"/><rect x="14" y="188" width="1" height="1" fill="#808080"/><rect x="16" y="188" width="1" height="1" fill="#808080"/><rect x="18" y="188" width="1" height="1" fill="#808080"/><rect x="20" y="188" width="1" height="1" fill="#808080"/><rect x="20" y="88" width="1" height="1" fill="#808080"/><rect x="31" y="98" width="1" height="1" fill="#808080"/><rect x="31" y="100" width="1" height="1" fill="#808080"/><rect x="31" y="102" width="1" height="1" fill="#808080"/><rect x="31" y="104" width="1" height="1" fill="#808080"/><rect x="31" y="106" width="1" height="1" fill="#808080"/><rect x="31" y="108" width="1" height="1" fill="#808080"/><rect x="31" y="110" width="1" height="1" fill="#808080"/><rect x="31" y="112" width="1" height="1" fill="#808080"/><rect x="31" y="114" width="1" height="1" fill="#808080"/><rect x="31" y="116" width="1" height="1" fill="#808080"/><rect x="31" y="118" width="1" height="1" fill="#808080"/><rect x="31" y="120" width="1" height="1" fill="#808080"/><rect x="31" y="122" width="1" height="1" fill="#808080"/><rect x="31" y="124" width="1" height="1" fill="#808080"/><rect x="31" y="126" width="1" height="1" fill="#808080"/><rect x="31" y="128" width="1" height="1" fill="#808080"/><rect x="31" y="130" width="1" height="1" fill="#808080"/><rect x="31" y="132" width="1" height="1" fill="#808080"/><rect x="31" y="134" width="1" height="1" fill="#808080"/><rect x="31" y="136" width="1" height="1" fill="#808080"/><rect x="31" y="138" width="1" height="1" fill="#808080"/><rect x="31" y="140" width="1" height="1" fill="#808080"/><rect x="31" y="142" width="1" height="1" fill="#808080"/><rect x="31" y="144" width="1" height="1" fill="#808080"/><rect x="31" y="146" width="1" height="1" fill="#808080"/><rect x="31" y="148" width="1" height="1" fill="#808080"/><rect x="31" y="150" width="1" height="1" fill="#808080"/><rect x="31" y="152" width="1" height="1" fill="#808080"/><rect x="31" y="154" width="1" height="1" fill="#808080"/><rect x="31" y="156" width="1" height="1" fill="#808080"/><rect x="31" y="158" width="1" height="1" fill="#808080"/><rect x="31" y="160" width="1" height="1" fill="#808080"/><rect x="31" y="162" width="1" height="1" fill="#808080"/><rect x="31" y="164" width="1" height="1" fill="#808080"/><rect x="31" y="166" width="1" height="1" fill="#808080"/><rect x="31" y="168" width="1" height="1" fill="#808080"/><path d="M28.5,104 L32.5,108 L28.5,112" fill="none" stroke="#b8b8b8" stroke-width="1.5" shape-rendering="auto"/><rect x="39" y="108" width="1" height="1" fill="#808080"/><rect x="42" y="101" width="16" height="14" fill="#000"/><rect x="43" y="102" width="14" height="12" fill="#fff"/><rect x="42" y="101" width="15" height="3" fill="#0000ff"/><rect x="42" y="101" width="15" height="1" fill="#0000c0"/><rect x="43" y="104" width="13" height="1" fill="#e8e8ff"/><rect x="48" y="105" width="3" height="1" fill="#0040ff"/><rect x="52" y="105" width="3" height="1" fill="#0040ff"/><rect x="45" y="107" width="10" height="1" fill="#909090"/><rect x="45" y="109" width="1" height="1" fill="#0000c0"/><rect x="48" y="109" width="3" height="1" fill="#0040ff"/><rect x="52" y="109" width="3" height="1" fill="#0040ff"/><rect x="45" y="111" width="1" height="1" fill="#0000c0"/><rect x="48" y="111" width="3" height="1" fill="#0040ff"/><rect x="52" y="111" width="3" height="1" fill="#0040ff"/><rect x="43" y="113" width="14" height="1" fill="#c8c8c8"/><path d="M28.5,124 L32.5,128 L28.5,132" fill="none" stroke="#b8b8b8" stroke-width="1.5" shape-rendering="auto"/><rect x="39" y="128" width="1" height="1" fill="#808080"/><rect x="42" y="121" width="16" height="14" fill="#000"/><rect x="43" y="122" width="14" height="12" fill="#fff"/><rect x="42" y="121" width="15" height="3" fill="#0000ff"/><rect x="42" y="121" width="15" height="1" fill="#0000c0"/><rect x="43" y="124" width="13" height="1" fill="#e8e8ff"/><rect x="48" y="125" width="3" height="1" fill="#0040ff"/><rect x="52" y="125" width="3" height="1" fill="#0040ff"/><rect x="45" y="127" width="10" height="1" fill="#909090"/><rect x="45" y="129" width="1" height="1" fill="#0000c0"/><rect x="48" y="129" width="3" height="1" fill="#0040ff"/><rect x="52" y="129" width="3" height="1" fill="#0040ff"/><rect x="45" y="131" width="1" height="1" fill="#0000c0"/><rect x="48" y="131" width="3" height="1" fill="#0040ff"/><rect x="52" y="131" width="3" height="1" fill="#0040ff"/><rect x="43" y="133" width="14" height="1" fill="#c8c8c8"/><path d="M28.5,144 L32.5,148 L28.5,152" fill="none" stroke="#b8b8b8" stroke-width="1.5" shape-rendering="auto"/><rect x="39" y="148" width="1" height="1" fill="#808080"/><rect x="42" y="141" width="16" height="14" fill="#000"/><rect x="43" y="142" width="14" height="12" fill="#fff"/><rect x="42" y="141" width="15" height="3" fill="#0000ff"/><rect x="42" y="141" width="15" height="1" fill="#0000c0"/><rect x="43" y="144" width="13" height="1" fill="#e8e8ff"/><rect x="48" y="145" width="3" height="1" fill="#0040ff"/><rect x="52" y="145" width="3" height="1" fill="#0040ff"/><rect x="45" y="147" width="10" height="1" fill="#909090"/><rect x="45" y="149" width="1" height="1" fill="#0000c0"/><rect x="48" y="149" width="3" height="1" fill="#0040ff"/><rect x="52" y="149" width="3" height="1" fill="#0040ff"/><rect x="45" y="151" width="1" height="1" fill="#0000c0"/><rect x="48" y="151" width="3" height="1" fill="#0040ff"/><rect x="52" y="151" width="3" height="1" fill="#0040ff"/><rect x="43" y="153" width="14" height="1" fill="#c8c8c8"/><path d="M28.5,164 L32.5,168 L28.5,172" fill="none" stroke="#b8b8b8" stroke-width="1.5" shape-rendering="auto"/><rect x="39" y="168" width="1" height="1" fill="#808080"/><rect x="42" y="161" width="16" height="14" fill="#000"/><rect x="43" y="162" width="14" height="12" fill="#fff"/><rect x="42" y="161" width="15" height="3" fill="#0000ff"/><rect x="42" y="161" width="15" height="1" fill="#0000c0"/><rect x="43" y="164" width="13" height="1" fill="#e8e8ff"/><rect x="48" y="165" width="3" height="1" fill="#0040ff"/><rect x="52" y="165" width="3" height="1" fill="#0040ff"/><rect x="45" y="167" width="10" height="1" fill="#909090"/><rect x="45" y="169" width="1" height="1" fill="#0000c0"/><rect x="48" y="169" width="3" height="1" fill="#0040ff"/><rect x="52" y="169" width="3" height="1" fill="#0040ff"/><rect x="45" y="171" width="1" height="1" fill="#0000c0"/><rect x="48" y="171" width="3" height="1" fill="#0040ff"/><rect x="52" y="171" width="3" height="1" fill="#0040ff"/><rect x="43" y="173" width="14" height="1" fill="#c8c8c8"/><path d="M23.5,82.5 L24.5,80.5 H30 L31,82 H37" fill="none" stroke="#808000" stroke-width="1"/><rect x="23.5" y="82.5" width="14" height="10" fill="#fff8c0" stroke="#a0a000" stroke-width="1"/><rect x="24" y="81" width="6" height="2" fill="#fff8c0"/><rect x="25" y="84" width="1" height="1" fill="#ffc0a0"/><rect x="27" y="86" width="1" height="1" fill="#ffc0a0"/><rect x="29" y="84" width="1" height="1" fill="#ffc0a0"/><rect x="27" y="85" width="12" height="11" fill="#404040"/><rect x="28" y="86" width="10" height="9" fill="#fff"/><rect x="28" y="86" width="10" height="2" fill="#000080"/><rect x="28" y="88" width="10" height="1" fill="#e0e0e0"/><path d="M29,91 L30,92.5 L32,89.5" fill="none" stroke="#e00000" stroke-width="1.3" shape-rendering="auto"/><rect x="33" y="90" width="2" height="2" fill="#20b020"/><rect x="35" y="90" width="2" height="2" fill="#2040ff"/><rect x="34" y="89" width="2" height="1" fill="#2040ff"/><rect x="34" y="92" width="2" height="1" fill="#20b020"/><path d="M23.5,182.5 L24.5,180.5 H30 L31,182 H37" fill="none" stroke="#808000" stroke-width="1"/><rect x="23.5" y="182.5" width="14" height="10" fill="#fff8c0" stroke="#a0a000" stroke-width="1"/><rect x="24" y="181" width="6" height="2" fill="#fff8c0"/><rect x="25" y="184" width="1" height="1" fill="#ffc0a0"/><rect x="27" y="186" width="1" height="1" fill="#ffc0a0"/><rect x="29" y="184" width="1" height="1" fill="#ffc0a0"/><rect x="27" y="185" width="12" height="11" fill="#404040"/><rect x="28" y="186" width="10" height="9" fill="#fff"/><rect x="28" y="186" width="10" height="2" fill="#000080"/><rect x="28" y="188" width="10" height="1" fill="#e0e0e0"/><path d="M29,191 L30,192.5 L32,189.5" fill="none" stroke="#e00000" stroke-width="1.3" shape-rendering="auto"/><rect x="33" y="190" width="2" height="2" fill="#20b020"/><rect x="35" y="190" width="2" height="2" fill="#2040ff"/><rect x="34" y="189" width="2" height="1" fill="#2040ff"/><rect x="34" y="192" width="2" height="1" fill="#20b020"/><path d="M210.2,89.3 L213.6,85.4 L217,89.3" fill="none" stroke="#b4b4b4" stroke-width="2" shape-rendering="auto"/><path d="M210.2,708.6 L213.6,712.5 L217,708.6" fill="none" stroke="#b4b4b4" stroke-width="2" shape-rendering="auto"/><path d="M12,724.6 L8.3,728 L12,731.4" fill="none" stroke="#b4b4b4" stroke-width="2" shape-rendering="auto"/><path d="M195,724.6 L198.7,728 L195,731.4" fill="none" stroke="#b4b4b4" stroke-width="2" shape-rendering="auto"/><path d="M992.3,88 L995.5,84.3 L998.7,88" fill="none" stroke="#505050" stroke-width="2" shape-rendering="auto"/><path d="M992.3,709.5 L995.5,713.2 L998.7,709.5" fill="none" stroke="#505050" stroke-width="2" shape-rendering="auto"/><path d="M241,725 L237.3,728.3 L241,731.6" fill="none" stroke="#505050" stroke-width="2" shape-rendering="auto"/><path d="M977,725 L980.7,728.3 L977,731.6" fill="none" stroke="#505050" stroke-width="2" shape-rendering="auto"/><rect x="1001" y="750" width="2" height="2" fill="#b4b4b4"/><rect x="998" y="753" width="2" height="2" fill="#b4b4b4"/><rect x="1001" y="753" width="2" height="2" fill="#b4b4b4"/><rect x="995" y="756" width="2" height="2" fill="#b4b4b4"/><rect x="998" y="756" width="2" height="2" fill="#b4b4b4"/><rect x="1001" y="756" width="2" height="2" fill="#b4b4b4"/></svg></body></html>
